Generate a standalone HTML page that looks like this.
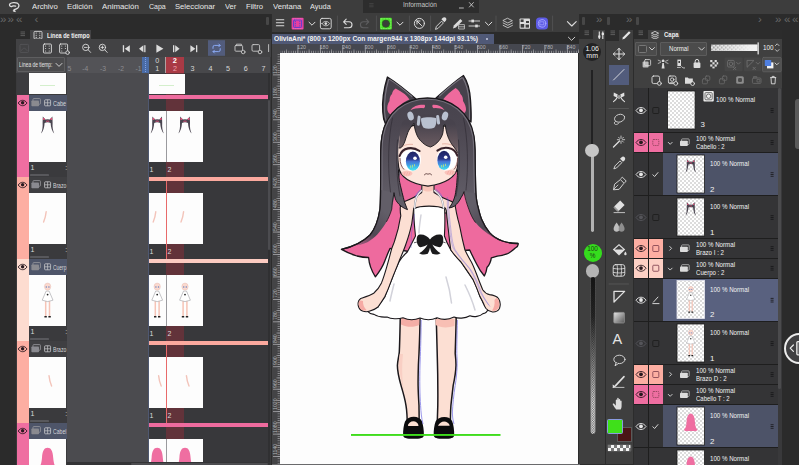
<!DOCTYPE html>
<html lang="es">
<head>
<meta charset="utf-8">
<title>OliviaAni - Clip Studio Paint</title>
<style>
html,body{margin:0;padding:0;}
body{width:799px;height:465px;overflow:hidden;background:#2c2c2c;position:relative;
 font-family:"Liberation Sans",sans-serif;color:#e4e4e4;}
.a{position:absolute;box-sizing:border-box;}
.t{position:absolute;white-space:nowrap;line-height:1;}
svg{position:absolute;overflow:visible;}
/* ---- menu ---- */
#menubar{left:0;top:0;width:799px;height:14px;background:#3d3d3d;}
#menubar .t{top:2.5px;font-size:8.6px;color:#e8e8e8;}
#info{left:363px;top:0;width:116px;height:13px;background:#2d2d2d;}
/* ---- left ---- */
#leftdock{left:0;top:14px;width:16px;height:451px;background:#2b2b2b;}
#leftarea{left:0;top:14px;width:271px;height:451px;background:#2b2b2b;}
#tl{left:16px;top:39px;width:255px;height:426px;background:#3a3a3c;}
/* ---- canvas ---- */
#cmdbar{left:272px;top:14px;width:307px;height:18px;background:#3d3d3d;}
#doctabs{left:272px;top:32px;width:307px;height:12px;background:#2b2b2b;}
#doctab{left:272px;top:34.400px;width:221.600px;height:9.600px;background:#505977;}
#hruler{left:272px;top:44px;width:307px;height:9px;background:#45474f;}
#vruler{left:272px;top:44px;width:8px;height:421px;background:#444446;}
#canvas{left:280px;top:53px;width:298px;height:411px;background:#fdfdfd;}
/* ---- right ---- */
#sliderpanel{left:579px;top:39px;width:26.400px;height:424.600px;background:#3f3f3f;}
#toolpanel{left:606px;top:41px;width:26.800px;height:422.600px;background:#3f3f3f;}
#layerpanel{left:634px;top:39px;width:148px;height:426px;background:#404040;}
#layerlist{left:634px;top:88px;width:144px;height:377px;background:#1e1e1e;}
</style>
</head>
<body>
<div class="a" id="menubar"></div>
<span class="t" style="left:31.75px;top:2.78px;font-size:8px;color:#e8e8e8;transform:scaleX(0.965);transform-origin:0 0;">Archivo</span>
<span class="t" style="left:67px;top:2.78px;font-size:8px;color:#e8e8e8;transform:scaleX(0.971);transform-origin:0 0;">Edición</span>
<span class="t" style="left:102px;top:2.78px;font-size:8px;color:#e8e8e8;transform:scaleX(0.984);transform-origin:0 0;">Animación</span>
<span class="t" style="left:148.75px;top:2.78px;font-size:8px;color:#e8e8e8;transform:scaleX(0.876);transform-origin:0 0;">Capa</span>
<span class="t" style="left:175px;top:2.78px;font-size:8px;color:#e8e8e8;transform:scaleX(0.957);transform-origin:0 0;">Seleccionar</span>
<span class="t" style="left:224.5px;top:2.78px;font-size:8px;color:#e8e8e8;transform:scaleX(0.936);transform-origin:0 0;">Ver</span>
<span class="t" style="left:245.5px;top:2.78px;font-size:8px;color:#e8e8e8;transform:scaleX(0.956);transform-origin:0 0;">Filtro</span>
<span class="t" style="left:272.5px;top:2.78px;font-size:8px;color:#e8e8e8;transform:scaleX(0.962);transform-origin:0 0;">Ventana</span>
<span class="t" style="left:310px;top:2.78px;font-size:8px;color:#e8e8e8;transform:scaleX(0.920);transform-origin:0 0;">Ayuda</span>
<div class="a" id="info"></div>
<span class="t" style="left:403px;top:2.27px;font-size:6.8px;color:#c4c4c4;transform:scaleX(0.957);transform-origin:0 0;">Información</span>
<svg style="left:363px;top:0" width="116" height="13" viewBox="363 0 116 13" fill="none" stroke="#c8c8c8" stroke-width="0.900" stroke-linecap="round"><path d="M459.400,8h4M469.400,2.600l4,4.400M473.400,2.600l-4,4.400"/><g stroke="#4a4a4a" stroke-width="0.700"><path d="M369.600,3.600h3.600M369.600,5.200h3.600M369.600,6.800h3.600"/></g></svg>
<svg style="left:8px;top:0" width="13" height="14" viewBox="8 0 13 14" fill="none" stroke="#dedede" stroke-width="1.300" stroke-linecap="round" stroke-linejoin="round"><path d="M15.600,6.200C14,5.600 12.300,5.800 11.300,6.700C9.600,6.300 9,4.800 10,3.800C11.600,2.400 15.200,2.200 17.400,3.200C19.500,4.400 19.300,6.800 17.800,8C16.600,8.900 15.300,9.300 14.100,9.700L15.100,11.500L13.400,10.800"/></svg>
<!-- ===== left dock + timeline ===== -->
<div class="a" id="leftarea"></div>
<div class="a" style="left:266px;top:16.5px;width:3px;height:8px;background:#474747;border-radius:1px"></div>
<span class="t" style="left:0px;top:13.5px;font-size:11.500px;color:#686868;letter-spacing:-1px">»</span>
<span class="t" style="left:7.6px;top:13.5px;font-size:11.500px;color:#686868;letter-spacing:-1px">»</span>
<span class="t" style="left:16px;top:13.5px;font-size:11.500px;color:#686868;letter-spacing:-1px">«</span>
<span class="t" style="left:34.6px;top:13.5px;font-size:11.500px;color:#686868">‹</span>
<div class="a" style="left:29.500px;top:30px;width:61.500px;height:10px;background:#434345"></div>
<svg style="left:16px;top:30px" width="80" height="10" viewBox="16 30 80 10" fill="none"><g stroke="#6a6a6a" stroke-width="0.8"><path d="M20.500,32h4.500M20.500,33.800h4.500M20.500,35.600h4.500"/></g><rect x="34" y="31.400" width="8" height="7.600" rx="1" stroke="#e6e6e6" stroke-width="0.8"/><path d="M36.200,33v0.010M36.200,35.200v0.010M36.200,37.400v0.010M39.800,33v0.010M39.800,35.200v0.010M39.800,37.400v0.010" stroke="#e6e6e6" stroke-width="1.100" stroke-linecap="round"/></svg>
<span class="t" style="left:46.6px;top:31.97px;font-size:7.4px;color:#f0f0f0;font-weight:bold;transform:scaleX(0.757);transform-origin:0 0;">Línea de tiempo</span>
<div class="a" id="tl"></div>
<div class="a" style="left:16px;top:39px;width:255px;height:17.600px;background:#424244"></div>
<svg style="left:16px;top:39px" width="254" height="18" viewBox="16 39 254 18" fill="none" stroke="#dcdcdc" stroke-width="0.9" stroke-linecap="round" stroke-linejoin="round"><g stroke="#555558"><rect x="20" y="44.400" width="8.600" height="8" rx="1"/><path d="M21.600,50.400c1.600,-3 3,-3 5.400,0"/></g><rect x="43.400" y="44" width="8" height="9" rx="1"/><path d="M45.600,46v0.010M45.600,48.500v0.010M45.600,51v0.010M49.200,46v0.010M49.200,48.500v0.010M49.200,51v0.010" stroke-width="1.100"/><rect x="59.600" y="44" width="8" height="9" rx="1"/><path d="M61.800,46v0.010M61.800,48.500v0.010M61.800,51v0.010M65.400,46v0.010M65.400,48.500v0.010" stroke-width="1.100"/><circle cx="67.600" cy="52.600" r="1.800" fill="#424244"/><circle cx="85.800" cy="47.400" r="3.200"/><path d="M88.200,49.800l2.400,2.600M84.400,47.400h2.800"/><circle cx="102.400" cy="47.400" r="3.200"/><path d="M104.800,49.800l2.400,2.600M101,47.400h2.800M102.400,46v2.800"/><g fill="#dcdcdc" stroke="none"><rect x="122.800" y="45.200" width="1.300" height="7"/><path d="M129.800,45.200v7l-5,-3.500z"/><path d="M143.400,45.200v7l-4.400,-3.500z"/><rect x="144.200" y="45.200" width="1.300" height="7"/><path d="M156.400,44.600v8.200l7,-4.100z"/><rect x="173" y="45.200" width="1.300" height="7"/><path d="M175.200,45.200v7l4.400,-3.500z"/><path d="M190.400,45.200v7l5,-3.500z"/><rect x="196" y="45.200" width="1.300" height="7"/></g><rect x="208" y="40.200" width="17" height="15.600" fill="#525c7c" stroke="none"/><g stroke="#8fb0ff" stroke-width="0.9"><path d="M213,48.400v-1.400a1.600,1.600 0 0 1 1.600,-1.600h5.400M220.200,48.600v1.400a1.600,1.600 0 0 1 -1.600,1.600h-5.400"/><path d="M218.800,44l1.400,1.400l-1.400,1.400M214.400,50.200l-1.400,1.400l1.400,1.400"/></g><g stroke="#c8c8c8"><rect x="235" y="45.600" width="7.600" height="5.600" rx="0.800"/><path d="M236.400,45.400v-1.200h5v1.200"/><circle cx="243.200" cy="52" r="1.800" fill="#424244"/><rect x="252" y="44.600" width="7.600" height="6.600" rx="1.200"/><circle cx="260" cy="52" r="1.800" fill="#424244"/><path d="M268.600,44.600v7" /></g></svg>
<div class="a" style="left:16px;top:56.6px;width:254px;height:16.2px;background:#48484b"></div>
<div class="a" style="left:16.600px;top:56.600px;width:48.600px;height:15.800px;background:#4b4b4d;border:1px solid #5e5e60;border-radius:1px"></div>
<span class="t" style="left:18.6px;top:61.67px;font-size:6.8px;color:#e4e4e4;transform:scaleX(0.713);transform-origin:0 0;">Línea de tiemp:</span>
<svg style="left:55px;top:60px" width="8" height="8" viewBox="55 60 8 8" fill="none" stroke="#dcdcdc" stroke-width="0.9" stroke-linecap="round"><path d="M56,63.400l3,3l3,-3"/></svg>
<div class="a" style="left:148.5px;top:72.8px;width:119.500px;height:392.200px;background:#38383b"></div>
<div class="a" style="left:165.6px;top:56.6px;width:18.800px;height:16.200px;background:#a93a45"></div>
<div class="a" style="left:165.6px;top:72.8px;width:18.800px;height:392.200px;background:#62333a"></div>
<div class="a" style="left:164.900px;top:56.600px;width:0.800px;height:16.200px;background:#b0a0a0"></div>
<div class="a" style="left:67px;top:72.8px;width:81.4px;height:392.2px;background:#4b4b4f"></div>
<div class="a" style="left:67px;top:56.6px;width:75.4px;height:16.2px;background:#535357"></div>
<div class="a" style="left:142.200px;top:56.600px;width:6.400px;height:16.200px;background:#4a6ca6"></div>
<div class="a" style="left:145px;top:57.400px;width:0;height:14.600px;border-left:1px dotted #7ea0e8"></div>
<div class="a" style="left:148px;top:72.800px;width:0.800px;height:392.200px;background:#4f5870"></div>
<span class="t" style="left:82.2px;top:65.87px;font-size:6.8px;color:#8c8c90;">-4</span>
<span class="t" style="left:100px;top:65.87px;font-size:6.8px;color:#8c8c90;">-3</span>
<span class="t" style="left:118px;top:65.87px;font-size:6.8px;color:#8c8c90;">-2</span>
<span class="t" style="left:135.6px;top:65.87px;font-size:6.8px;color:#8c8c90;">-1</span>
<span class="t" style="left:67.4px;top:65.87px;font-size:6.8px;color:#8c8c90;">5</span>
<span class="t" style="left:155.2px;top:65.07px;font-size:7.2px;color:#d8d8d8;">1</span>
<span class="t" style="left:190.6px;top:65.07px;font-size:7.2px;color:#d8d8d8;">3</span>
<span class="t" style="left:208.4px;top:65.07px;font-size:7.2px;color:#d8d8d8;">4</span>
<span class="t" style="left:226.1px;top:65.07px;font-size:7.2px;color:#d8d8d8;">5</span>
<span class="t" style="left:243.8px;top:65.07px;font-size:7.2px;color:#d8d8d8;">6</span>
<span class="t" style="left:261.5px;top:65.07px;font-size:7.2px;color:#d8d8d8;">7</span>
<span class="t" style="left:155.2px;top:56.67px;font-size:7.2px;color:#d8d8d8;">0</span>
<span class="t" style="left:172.8px;top:56.57px;font-size:7.4px;color:#ffffff;font-weight:bold;">2</span>
<span class="t" style="left:172.9px;top:65.07px;font-size:7.2px;color:#f0a4b0;">2</span>
<div class="a" style="left:16.600px;top:72.800px;width:12px;height:22.200px;background:#3c3c3f"></div>
<div class="a" style="left:29px;top:73.400px;width:37.400px;height:21px;background:#fdfdfd"></div>
<div class="a" style="left:148.800px;top:73.600px;width:36.400px;height:20.600px;background:#fdfdfd"></div>
<div class="a" style="left:40px;top:84.600px;width:15px;height:0.800px;background:#d4efcc"></div>
<div class="a" style="left:159px;top:84.600px;width:15px;height:0.800px;background:#d4efcc"></div>
<div class="a" style="left:16.600px;top:95px;width:12px;height:82px;background:#ef6ea1"></div>
<div class="a" style="left:29px;top:95px;width:38px;height:15.600px;background:#4e5569"></div>
<div class="a" style="left:29px;top:110.6px;width:37.400px;height:51.400px;background:#fdfdfd"></div>
<div class="a" style="left:29px;top:162px;width:38px;height:15px;background:#3a3a3d"></div>
<div class="a" style="left:30px;top:174.4px;width:19px;height:1.200px;background:#58585c;border-radius:0.600px"></div>
<span class="t" style="left:30.4px;top:163.97px;font-size:7px;color:#dcdcdc;">1</span>
<span class="t" style="left:65.2px;top:163.97px;font-size:7px;color:#dcdcdc;">:</span>
<span class="t" style="left:53.4px;top:99.57px;font-size:7px;color:#d4d4d8;transform:scaleX(0.777);transform-origin:0 0;">Cabe</span>
<div class="a" style="left:148.6px;top:95px;width:119.400px;height:4.400px;background:#ee6b9e"></div>
<div class="a" style="left:148.8px;top:110.6px;width:16.800px;height:51.400px;background:#fdfdfd"></div>
<div class="a" style="left:166.6px;top:110.6px;width:36.200px;height:51.400px;background:#fdfdfd"></div>
<div class="a" style="left:165.6px;top:110.6px;width:1px;height:51.4px;background:#9a9a9e"></div>
<span class="t" style="left:149.4px;top:166.17px;font-size:7px;color:#dcdcdc;">1</span>
<span class="t" style="left:167.4px;top:166.17px;font-size:7px;color:#dcdcdc;">2</span>
<div class="a" style="left:16.600px;top:177px;width:12px;height:82px;background:#fdaea2"></div>
<div class="a" style="left:29px;top:177px;width:38px;height:15.600px;background:#3f3f42"></div>
<div class="a" style="left:29px;top:192.6px;width:37.400px;height:51.400px;background:#fdfdfd"></div>
<div class="a" style="left:29px;top:244px;width:38px;height:15px;background:#3a3a3d"></div>
<div class="a" style="left:30px;top:256.4px;width:19px;height:1.200px;background:#58585c;border-radius:0.600px"></div>
<span class="t" style="left:30.4px;top:245.97px;font-size:7px;color:#dcdcdc;">1</span>
<span class="t" style="left:65.2px;top:245.97px;font-size:7px;color:#dcdcdc;">:</span>
<span class="t" style="left:53.4px;top:181.57px;font-size:7px;color:#d4d4d8;transform:scaleX(0.732);transform-origin:0 0;">Brazo</span>
<div class="a" style="left:148.6px;top:177px;width:119.400px;height:4.400px;background:#fba99e"></div>
<div class="a" style="left:148.8px;top:192.6px;width:16.800px;height:51.400px;background:#fdfdfd"></div>
<div class="a" style="left:166.6px;top:192.6px;width:36.200px;height:51.400px;background:#fdfdfd"></div>
<div class="a" style="left:165.6px;top:181.4px;width:1px;height:77.6px;background:#e86a6a"></div>
<span class="t" style="left:149.4px;top:248.17px;font-size:7px;color:#dcdcdc;">1</span>
<span class="t" style="left:167.4px;top:248.17px;font-size:7px;color:#dcdcdc;">2</span>
<div class="a" style="left:16.600px;top:259px;width:12px;height:82px;background:#fddcd0"></div>
<div class="a" style="left:29px;top:259px;width:38px;height:15.600px;background:#4e5569"></div>
<div class="a" style="left:29px;top:274.6px;width:37.400px;height:51.400px;background:#fdfdfd"></div>
<div class="a" style="left:29px;top:326px;width:38px;height:15px;background:#3a3a3d"></div>
<div class="a" style="left:30px;top:338.4px;width:19px;height:1.200px;background:#58585c;border-radius:0.600px"></div>
<span class="t" style="left:30.4px;top:327.97px;font-size:7px;color:#dcdcdc;">1</span>
<span class="t" style="left:65.2px;top:327.97px;font-size:7px;color:#dcdcdc;">:</span>
<span class="t" style="left:53.4px;top:263.57px;font-size:7px;color:#d4d4d8;transform:scaleX(0.702);transform-origin:0 0;">Cuerp</span>
<div class="a" style="left:148.6px;top:259px;width:119.400px;height:4.400px;background:#fccbc1"></div>
<div class="a" style="left:148.8px;top:274.6px;width:16.800px;height:51.400px;background:#fdfdfd"></div>
<div class="a" style="left:166.6px;top:274.6px;width:36.200px;height:51.400px;background:#fdfdfd"></div>
<div class="a" style="left:165.6px;top:274.6px;width:1px;height:51.4px;background:#9a9a9e"></div>
<span class="t" style="left:149.4px;top:330.17px;font-size:7px;color:#dcdcdc;">1</span>
<span class="t" style="left:167.4px;top:330.17px;font-size:7px;color:#dcdcdc;">2</span>
<div class="a" style="left:16.600px;top:341px;width:12px;height:82px;background:#fdaea2"></div>
<div class="a" style="left:29px;top:341px;width:38px;height:15.600px;background:#3f3f42"></div>
<div class="a" style="left:29px;top:356.6px;width:37.400px;height:51.400px;background:#fdfdfd"></div>
<div class="a" style="left:29px;top:408px;width:38px;height:15px;background:#3a3a3d"></div>
<div class="a" style="left:30px;top:420.4px;width:19px;height:1.200px;background:#58585c;border-radius:0.600px"></div>
<span class="t" style="left:30.4px;top:409.97px;font-size:7px;color:#dcdcdc;">1</span>
<span class="t" style="left:65.2px;top:409.97px;font-size:7px;color:#dcdcdc;">:</span>
<span class="t" style="left:53.4px;top:345.57px;font-size:7px;color:#d4d4d8;transform:scaleX(0.732);transform-origin:0 0;">Brazo</span>
<div class="a" style="left:148.6px;top:341px;width:119.400px;height:4.400px;background:#fba99e"></div>
<div class="a" style="left:148.8px;top:356.6px;width:16.800px;height:51.400px;background:#fdfdfd"></div>
<div class="a" style="left:166.6px;top:356.6px;width:36.200px;height:51.400px;background:#fdfdfd"></div>
<div class="a" style="left:165.6px;top:345.4px;width:1px;height:77.6px;background:#e86a6a"></div>
<span class="t" style="left:149.4px;top:412.17px;font-size:7px;color:#dcdcdc;">1</span>
<span class="t" style="left:167.4px;top:412.17px;font-size:7px;color:#dcdcdc;">2</span>
<div class="a" style="left:16.600px;top:423px;width:12px;height:82px;background:#ef6ea1"></div>
<div class="a" style="left:29px;top:423px;width:38px;height:15.600px;background:#4e5569"></div>
<div class="a" style="left:29px;top:438.6px;width:37.400px;height:51.400px;background:#fdfdfd"></div>
<div class="a" style="left:29px;top:490px;width:38px;height:15px;background:#3a3a3d"></div>
<div class="a" style="left:30px;top:502.4px;width:19px;height:1.200px;background:#58585c;border-radius:0.600px"></div>
<span class="t" style="left:30.4px;top:491.97px;font-size:7px;color:#dcdcdc;">1</span>
<span class="t" style="left:65.2px;top:491.97px;font-size:7px;color:#dcdcdc;">:</span>
<span class="t" style="left:53.4px;top:427.57px;font-size:7px;color:#d4d4d8;transform:scaleX(0.732);transform-origin:0 0;">Cabel</span>
<div class="a" style="left:148.6px;top:423px;width:119.400px;height:4.400px;background:#ee6b9e"></div>
<div class="a" style="left:148.8px;top:438.6px;width:16.800px;height:51.400px;background:#fdfdfd"></div>
<div class="a" style="left:166.6px;top:438.6px;width:36.200px;height:51.400px;background:#fdfdfd"></div>
<div class="a" style="left:165.6px;top:438.6px;width:1px;height:51.4px;background:#9a9a9e"></div>
<span class="t" style="left:149.4px;top:494.17px;font-size:7px;color:#dcdcdc;">1</span>
<span class="t" style="left:167.4px;top:494.17px;font-size:7px;color:#dcdcdc;">2</span>
<svg style="left:0;top:0" width="271" height="465" viewBox="0 0 271 465"><path d="M18.200000000000003,103c2.400,-3.600 6.400,-3.600 8.800,0c-2.400,3.600 -6.400,3.600 -8.800,0z" fill="none" stroke="#2a1a20" stroke-width="0.900"/><circle cx="22.600" cy="102.8" r="1.700" fill="#2a1a20"/><rect x="33" y="98.6" width="7.400" height="5.600" rx="0.800" fill="none" stroke="#9a9aa0" stroke-width="0.800"/><rect x="31.400" y="100.4" width="7.600" height="5.800" rx="0.800" fill="#8a8a90"/><rect x="44.600" y="99.8" width="6" height="6" rx="0.800" fill="none" stroke="#c8c8cc" stroke-width="0.800"/><path d="M47.600,99.8v6M44.600,102.8h6" stroke="#c8c8cc" stroke-width="0.700"/><path d="M42.8,116.6 L45.4,119.6 Q47.6,118.8 49.8,119.6 L52.4,116.6 L52.6,122.6 Q52.2,129.6 54.2,133.4 Q51.0,130.6 50.6,123.1 Q47.6,121.6 44.6,123.1 Q44.2,130.6 41.0,133.4 Q43.0,129.6 42.6,122.6 Z" fill="#4a4550"/><circle cx="43.9" cy="119.0" r="1.00" fill="#e8507c"/><circle cx="51.3" cy="119.0" r="1.00" fill="#e8507c"/><path d="M46.0,121.4 Q47.6,120.6 49.2,121.4" stroke="#e8507c" stroke-width="0.90" fill="none"/><path d="M152.4,116.6 L155.0,119.6 Q157.2,118.8 159.4,119.6 L162.0,116.6 L162.2,122.6 Q161.8,129.6 163.8,133.4 Q160.6,130.6 160.2,123.1 Q157.2,121.6 154.2,123.1 Q153.8,130.6 150.6,133.4 Q152.6,129.6 152.2,122.6 Z" fill="#4a4550"/><circle cx="153.5" cy="119.0" r="1.00" fill="#e8507c"/><circle cx="160.9" cy="119.0" r="1.00" fill="#e8507c"/><path d="M155.6,121.4 Q157.2,120.6 158.8,121.4" stroke="#e8507c" stroke-width="0.90" fill="none"/><path d="M180.2,116.6 L182.8,119.6 Q185.0,118.8 187.2,119.6 L189.8,116.6 L190.0,122.6 Q189.6,129.6 191.6,133.4 Q188.4,130.6 188.0,123.1 Q185.0,121.6 182.0,123.1 Q181.6,130.6 178.4,133.4 Q180.4,129.6 180.0,122.6 Z" fill="#4a4550"/><circle cx="181.3" cy="119.0" r="1.00" fill="#e8507c"/><circle cx="188.7" cy="119.0" r="1.00" fill="#e8507c"/><path d="M183.4,121.4 Q185.0,120.6 186.6,121.4" stroke="#e8507c" stroke-width="0.90" fill="none"/><path d="M18.200000000000003,185c2.400,-3.600 6.400,-3.600 8.800,0c-2.400,3.600 -6.400,3.600 -8.800,0z" fill="none" stroke="#2a1a20" stroke-width="0.900"/><circle cx="22.600" cy="184.8" r="1.700" fill="#2a1a20"/><rect x="33" y="180.6" width="7.400" height="5.600" rx="0.800" fill="none" stroke="#9a9aa0" stroke-width="0.800"/><rect x="31.400" y="182.4" width="7.600" height="5.800" rx="0.800" fill="#8a8a90"/><rect x="44.600" y="181.8" width="6" height="6" rx="0.800" fill="none" stroke="#c8c8cc" stroke-width="0.800"/><path d="M47.600,181.8v6M44.600,184.8h6" stroke="#c8c8cc" stroke-width="0.700"/><path d="M46.2,211.6c-0.400,4 -1.400,7.500 -2.600,10.500" stroke="#f3c4ba" stroke-width="1.400" fill="none" stroke-linecap="round"/><path d="M155.8,211.6c-0.400,4 -1.400,7.500 -2.600,10.500" stroke="#f3c4ba" stroke-width="1.400" fill="none" stroke-linecap="round"/><path d="M183.6,211.6c-0.400,4 -1.400,7.500 -2.600,10.500" stroke="#f3c4ba" stroke-width="1.400" fill="none" stroke-linecap="round"/><path d="M18.200000000000003,267c2.400,-3.600 6.400,-3.600 8.800,0c-2.400,3.600 -6.400,3.600 -8.800,0z" fill="none" stroke="#2a1a20" stroke-width="0.900"/><circle cx="22.600" cy="266.8" r="1.700" fill="#2a1a20"/><rect x="33" y="262.6" width="7.400" height="5.600" rx="0.800" fill="none" stroke="#9a9aa0" stroke-width="0.800"/><rect x="31.400" y="264.4" width="7.600" height="5.800" rx="0.800" fill="#8a8a90"/><rect x="44.600" y="263.8" width="6" height="6" rx="0.800" fill="none" stroke="#c8c8cc" stroke-width="0.800"/><path d="M47.600,263.8v6M44.600,266.8h6" stroke="#c8c8cc" stroke-width="0.700"/><path d="M45.7,300.6V316.1M49.5,300.6V316.1" stroke="#f6c4b6" stroke-width="1.50"/><path d="M46.1,291.1H49.1L53.0,300.2Q47.6,303.0 42.2,300.2Z" fill="#fff" stroke="#8a8a90" stroke-width="0.50"/><ellipse cx="47.6" cy="286.6" rx="3.20" ry="3.60" fill="#fbd9ce" stroke="#d8a8a0" stroke-width="0.300"/><path d="M45.7,287.0h1.20M48.3,287.0h1.20" stroke="#3a6ac0" stroke-width="1.10"/><circle cx="47.6" cy="294.6" r="0.90" fill="#222"/><path d="M44.4,316.8h2.40M48.4,316.8h2.40" stroke="#222" stroke-width="1.50"/><path d="M155.3,300.6V316.1M159.1,300.6V316.1" stroke="#f6c4b6" stroke-width="1.50"/><path d="M155.7,291.1H158.7L162.6,300.2Q157.2,303.0 151.8,300.2Z" fill="#fff" stroke="#8a8a90" stroke-width="0.50"/><ellipse cx="157.2" cy="286.6" rx="3.20" ry="3.60" fill="#fbd9ce" stroke="#d8a8a0" stroke-width="0.300"/><path d="M155.3,287.0h1.20M157.9,287.0h1.20" stroke="#3a6ac0" stroke-width="1.10"/><circle cx="157.2" cy="294.6" r="0.90" fill="#222"/><path d="M154.0,316.8h2.40M158.0,316.8h2.40" stroke="#222" stroke-width="1.50"/><path d="M183.1,300.6V316.1M186.9,300.6V316.1" stroke="#f6c4b6" stroke-width="1.50"/><path d="M183.5,291.1H186.5L190.4,300.2Q185.0,303.0 179.6,300.2Z" fill="#fff" stroke="#8a8a90" stroke-width="0.50"/><ellipse cx="185.0" cy="286.6" rx="3.20" ry="3.60" fill="#fbd9ce" stroke="#d8a8a0" stroke-width="0.300"/><path d="M183.1,287.0h1.20M185.7,287.0h1.20" stroke="#3a6ac0" stroke-width="1.10"/><circle cx="185.0" cy="294.6" r="0.90" fill="#222"/><path d="M181.8,316.8h2.40M185.8,316.8h2.40" stroke="#222" stroke-width="1.50"/><path d="M18.200000000000003,349c2.400,-3.600 6.400,-3.600 8.800,0c-2.400,3.600 -6.400,3.600 -8.800,0z" fill="none" stroke="#2a1a20" stroke-width="0.900"/><circle cx="22.600" cy="348.8" r="1.700" fill="#2a1a20"/><rect x="33" y="344.6" width="7.400" height="5.600" rx="0.800" fill="none" stroke="#9a9aa0" stroke-width="0.800"/><rect x="31.400" y="346.4" width="7.600" height="5.800" rx="0.800" fill="#8a8a90"/><rect x="44.600" y="345.8" width="6" height="6" rx="0.800" fill="none" stroke="#c8c8cc" stroke-width="0.800"/><path d="M47.600,345.8v6M44.600,348.8h6" stroke="#c8c8cc" stroke-width="0.700"/><path d="M49.0,375.6c0.400,4 1.400,7.500 2.600,10.500" stroke="#f3c4ba" stroke-width="1.400" fill="none" stroke-linecap="round"/><path d="M158.6,375.6c0.400,4 1.400,7.500 2.600,10.500" stroke="#f3c4ba" stroke-width="1.400" fill="none" stroke-linecap="round"/><path d="M186.4,375.6c0.400,4 1.400,7.500 2.600,10.500" stroke="#f3c4ba" stroke-width="1.400" fill="none" stroke-linecap="round"/><path d="M18.200000000000003,431c2.400,-3.600 6.400,-3.600 8.800,0c-2.400,3.600 -6.400,3.600 -8.800,0z" fill="none" stroke="#2a1a20" stroke-width="0.900"/><circle cx="22.600" cy="430.8" r="1.700" fill="#2a1a20"/><rect x="33" y="426.6" width="7.400" height="5.600" rx="0.800" fill="none" stroke="#9a9aa0" stroke-width="0.800"/><rect x="31.400" y="428.4" width="7.600" height="5.800" rx="0.800" fill="#8a8a90"/><rect x="44.600" y="427.8" width="6" height="6" rx="0.800" fill="none" stroke="#c8c8cc" stroke-width="0.800"/><path d="M47.600,427.8v6M44.600,430.8h6" stroke="#c8c8cc" stroke-width="0.700"/><path d="M43.0,470.2c-2,0.600 -3.600,0 -4.800,-1.500c2.500,-2.200 3.400,-6.400 3.800,-11c0.400,-7 2.200,-10 5.600,-10c3.400,0 5.200,3 5.600,10c0.400,4.600 1.300,8.800 3.800,11c-1.200,1.500 -2.800,2.100 -4.800,1.500z" fill="#ef6ea1"/><path d="M152.6,470.2c-2,0.600 -3.600,0 -4.800,-1.500c2.500,-2.200 3.400,-6.400 3.800,-11c0.400,-7 2.200,-10 5.600,-10c3.400,0 5.200,3 5.600,10c0.400,4.600 1.300,8.800 3.800,11c-1.200,1.500 -2.800,2.100 -4.800,1.500z" fill="#ef6ea1"/><path d="M180.4,470.2c-2,0.600 -3.600,0 -4.800,-1.500c2.500,-2.200 3.400,-6.400 3.800,-11c0.400,-7 2.200,-10 5.600,-10c3.400,0 5.200,3 5.600,10c0.400,4.600 1.300,8.800 3.800,11c-1.200,1.500 -2.800,2.100 -4.800,1.500z" fill="#ef6ea1"/></svg>
<div class="a" style="left:268px;top:72.800px;width:2px;height:392.200px;background:#303032"></div>
<div class="a" style="left:268.200px;top:100px;width:1.600px;height:150px;background:#4c4c50;border-radius:1px"></div>
<div class="a" style="left:67px;top:462.400px;width:203px;height:2.600px;background:#343436"></div>
<div class="a" style="left:131px;top:462.600px;width:137px;height:2.400px;background:#4d4d50;border-radius:1px"></div>
<!-- ===== command bar / doc tab / rulers / canvas ===== -->
<div class="a" id="cmdbar"></div>
<svg style="left:272px;top:14px" width="308" height="18" viewBox="272 14 308 18" fill="none" stroke="#dcdcdc" stroke-width="1" stroke-linecap="round" stroke-linejoin="round"><path d="M276.400,19.800h7.400M276.400,22.800h7.400M276.400,25.800h7.400" stroke-width="1.100"/><rect x="291.600" y="17.800" width="12" height="11.800" rx="1" fill="#e83ea0" stroke="none"/><rect x="293.600" y="20" width="8" height="7.400" rx="0.800" fill="none" stroke="#5a40d0" stroke-width="1"/><path d="M295.400,21.600v0.010M295.400,23.700v0.010M295.400,25.800v0.010M299.800,21.600v0.010M299.800,23.700v0.010M299.800,25.800v0.010" stroke="#5a40d0" stroke-width="1.200"/><path d="M293,18.800h9.200M293,28.600h9.200" stroke="#f070c0" stroke-width="0.800" stroke-dasharray="1.200 1"/><path d="M309,22.200l3,3l3,-3"/><rect x="320.400" y="18.400" width="10.800" height="10.400" rx="1.600" stroke-width="0.900"/><path d="M322,23.600c2,-3 5.600,-3 7.600,0c-2,3 -5.600,3 -7.600,0z" stroke-width="0.800"/><circle cx="325.800" cy="23.600" r="1.300" fill="#dcdcdc" stroke="none"/><path d="M337.400,16v14.400M376.400,16v14.400M409.400,16v14.400M430.600,16v14.400M496,16v14.400M552.600,16v14.400" stroke="#555557" stroke-width="0.800"/><path d="M346.200,19.200l-2.600,2.600l2.600,2.600M343.800,21.800h5.200a3,3 0 0 1 0,6h-4.600" stroke-width="1.100"/><path d="M366.200,19.200l2.600,2.600l-2.600,2.600M368.600,21.800h-5.200a3,3 0 0 0 0,6h4.600" stroke-width="1.100" stroke="#5e5e60"/><rect x="380" y="17.800" width="11.800" height="11.800" rx="1" fill="#44e022" stroke="none"/><circle cx="385.900" cy="23.700" r="3.600" fill="#3a3f3a" stroke="#2a5a20" stroke-width="0.800"/><path d="M381,18.800h9.800v9.800h-9.800z" stroke="#8af070" stroke-width="0.800" stroke-dasharray="1.400 1.200"/><path d="M397,22.200l3,3l3,-3"/><circle cx="419.400" cy="23.400" r="5" stroke-width="1"/><path d="M417,21l4.600,4.600M417,21h3M417,21v3" stroke-width="1"/><path d="M435.600,29l0.800,-2.600l5.200,-5.200l1.800,1.800l-5.200,5.200z" stroke-width="0.900"/><path d="M441.400,19.200l3,3l1.400,-1.400c0.800,-0.800 0.800,-2.200 0,-3c-0.800,-0.800 -2.200,-0.800 -3,0z" fill="#dcdcdc" stroke="none"/><path d="M453,28.400l0.800,-2.800l6.600,-6.600l2,2l-6.600,6.600z" fill="#dcdcdc" stroke="none"/><path d="M459,24.600h5.400v4.400h-5.400zM459,26.800h5.400" stroke-width="0.700"/><path d="M469,21h10.600M469,26h10.600" stroke-width="0.900"/><rect x="471.400" y="19.600" width="2.600" height="2.800" fill="#dcdcdc" stroke="none"/><rect x="475.200" y="24.600" width="2.600" height="2.800" fill="#dcdcdc" stroke="none"/><path d="M485.400,22.200l3.200,3.200l3.200,-3.200"/><path d="M507.800,18.400l4.600,2.300l-4.600,2.300l-4.600,-2.300z" stroke-width="0.800"/><path d="M503.200,23l4.600,2.300l4.600,-2.300M503.200,25.400l4.600,2.300l4.600,-2.300" stroke-width="0.800"/><g fill="#dcdcdc" stroke="none"><rect x="519.600" y="18.400" width="10.400" height="10.400" rx="0.800"/></g><g fill="#3e3e3e" stroke="none"><rect x="520.600" y="19.400" width="3" height="2.600"/><rect x="526" y="21" width="3" height="2"/><rect x="520.600" y="24" width="3.600" height="3.600"/><rect x="525.600" y="24.600" width="3.400" height="3"/></g><rect x="536" y="17.600" width="12" height="12" rx="3.600" fill="#5d5be6" stroke="none"/><circle cx="542" cy="23.400" r="3.800" fill="none" stroke="#a8a8ff" stroke-width="0.900"/><rect x="540.200" y="21.800" width="3.600" height="3" fill="none" stroke="#a8a8ff" stroke-width="0.700"/><path d="M567.400,21.600l4.400,4.400l4.400,-4.400" stroke-width="1.100"/></svg>
<div class="a" id="doctabs"></div>
<div class="a" id="doctab"></div>
<span class="t" style="left:274px;top:34.97px;font-size:7.4px;color:#f4f4f4;font-weight:bold;transform:scaleX(0.900);transform-origin:0 0;">OliviaAni* (800 x 1200px Con margen944 x 1308px 144dpi 93.1%)</span>
<div class="a" style="left:486.200px;top:37.600px;width:2px;height:2px;border-radius:1px;background:#c8cce0"></div>
<svg style="left:566px;top:34px" width="12" height="9" viewBox="566 34 12 9" fill="none" stroke="#dcdcdc" stroke-width="0.900" stroke-linecap="round"><path d="M568.400,37.200l3.200,3.200l3.200,-3.200"/></svg>
<div class="a" id="hruler"></div>
<div class="a" id="vruler"></div>
<svg style="left:272px;top:44px" width="308" height="421" viewBox="272 44 308 421"><defs><pattern id="ht" x="297.5" y="44" width="2.245" height="9" patternUnits="userSpaceOnUse"><rect x="0" y="6.800" width="0.700" height="2.200" fill="#9a9a9e"/></pattern><pattern id="vt" x="272" y="74.5" width="8" height="2.245" patternUnits="userSpaceOnUse"><rect x="5.600" y="0" width="2.200" height="0.700" fill="#9a9a9e"/></pattern></defs><rect x="280" y="44" width="299" height="9" fill="url(#ht)"/><rect x="272" y="53" width="8" height="412" fill="url(#vt)"/><rect x="286.27" y="49.400" width="0.700" height="3.600" fill="#9a9a9e"/><rect x="297.50" y="45" width="0.8" height="8" fill="#a8a8ac"/><rect x="308.72" y="49.400" width="0.700" height="3.600" fill="#9a9a9e"/><rect x="319.95" y="45" width="0.8" height="8" fill="#a8a8ac"/><rect x="331.17" y="49.400" width="0.700" height="3.600" fill="#9a9a9e"/><rect x="342.40" y="45" width="0.8" height="8" fill="#a8a8ac"/><rect x="353.62" y="49.400" width="0.700" height="3.600" fill="#9a9a9e"/><rect x="364.85" y="45" width="0.8" height="8" fill="#a8a8ac"/><rect x="376.07" y="49.400" width="0.700" height="3.600" fill="#9a9a9e"/><rect x="387.30" y="45" width="0.8" height="8" fill="#a8a8ac"/><rect x="398.52" y="49.400" width="0.700" height="3.600" fill="#9a9a9e"/><rect x="409.75" y="45" width="0.8" height="8" fill="#a8a8ac"/><rect x="420.97" y="49.400" width="0.700" height="3.600" fill="#9a9a9e"/><rect x="432.20" y="45" width="0.8" height="8" fill="#a8a8ac"/><rect x="443.42" y="49.400" width="0.700" height="3.600" fill="#9a9a9e"/><rect x="454.65" y="45" width="0.8" height="8" fill="#a8a8ac"/><rect x="465.87" y="49.400" width="0.700" height="3.600" fill="#9a9a9e"/><rect x="477.10" y="45" width="0.8" height="8" fill="#a8a8ac"/><rect x="488.32" y="49.400" width="0.700" height="3.600" fill="#9a9a9e"/><rect x="499.55" y="45" width="0.8" height="8" fill="#a8a8ac"/><rect x="510.77" y="49.400" width="0.700" height="3.600" fill="#9a9a9e"/><rect x="522.00" y="45" width="0.8" height="8" fill="#a8a8ac"/><rect x="533.22" y="49.400" width="0.700" height="3.600" fill="#9a9a9e"/><rect x="544.45" y="45" width="0.8" height="8" fill="#a8a8ac"/><rect x="555.67" y="49.400" width="0.700" height="3.600" fill="#9a9a9e"/><rect x="566.90" y="45" width="0.8" height="8" fill="#a8a8ac"/><rect x="578.12" y="49.400" width="0.700" height="3.600" fill="#9a9a9e"/><rect x="276.400" y="63.27" width="3.600" height="0.700" fill="#9a9a9e"/><rect x="273" y="74.50" width="7" height="0.800" fill="#a8a8ac"/><rect x="276.400" y="85.72" width="3.600" height="0.700" fill="#9a9a9e"/><rect x="273" y="96.95" width="7" height="0.800" fill="#a8a8ac"/><rect x="276.400" y="108.17" width="3.600" height="0.700" fill="#9a9a9e"/><rect x="273" y="119.40" width="7" height="0.800" fill="#a8a8ac"/><rect x="276.400" y="130.62" width="3.600" height="0.700" fill="#9a9a9e"/><rect x="273" y="141.85" width="7" height="0.800" fill="#a8a8ac"/><rect x="276.400" y="153.07" width="3.600" height="0.700" fill="#9a9a9e"/><rect x="273" y="164.30" width="7" height="0.800" fill="#a8a8ac"/><rect x="276.400" y="175.52" width="3.600" height="0.700" fill="#9a9a9e"/><rect x="273" y="186.75" width="7" height="0.800" fill="#a8a8ac"/><rect x="276.400" y="197.97" width="3.600" height="0.700" fill="#9a9a9e"/><rect x="273" y="209.20" width="7" height="0.800" fill="#a8a8ac"/><rect x="276.400" y="220.42" width="3.600" height="0.700" fill="#9a9a9e"/><rect x="273" y="231.65" width="7" height="0.800" fill="#a8a8ac"/><rect x="276.400" y="242.87" width="3.600" height="0.700" fill="#9a9a9e"/><rect x="273" y="254.10" width="7" height="0.800" fill="#a8a8ac"/><rect x="276.400" y="265.32" width="3.600" height="0.700" fill="#9a9a9e"/><rect x="273" y="276.55" width="7" height="0.800" fill="#a8a8ac"/><rect x="276.400" y="287.77" width="3.600" height="0.700" fill="#9a9a9e"/><rect x="273" y="299.00" width="7" height="0.800" fill="#a8a8ac"/><rect x="276.400" y="310.22" width="3.600" height="0.700" fill="#9a9a9e"/><rect x="273" y="321.45" width="7" height="0.800" fill="#a8a8ac"/><rect x="276.400" y="332.67" width="3.600" height="0.700" fill="#9a9a9e"/><rect x="273" y="343.90" width="7" height="0.800" fill="#a8a8ac"/><rect x="276.400" y="355.12" width="3.600" height="0.700" fill="#9a9a9e"/><rect x="273" y="366.35" width="7" height="0.800" fill="#a8a8ac"/><rect x="276.400" y="377.57" width="3.600" height="0.700" fill="#9a9a9e"/><rect x="273" y="388.80" width="7" height="0.800" fill="#a8a8ac"/><rect x="276.400" y="400.02" width="3.600" height="0.700" fill="#9a9a9e"/><rect x="273" y="411.25" width="7" height="0.800" fill="#a8a8ac"/><rect x="276.400" y="422.47" width="3.600" height="0.700" fill="#9a9a9e"/><rect x="273" y="433.70" width="7" height="0.800" fill="#a8a8ac"/><rect x="276.400" y="444.92" width="3.600" height="0.700" fill="#9a9a9e"/><rect x="273" y="456.15" width="7" height="0.800" fill="#a8a8ac"/><rect x="276.400" y="467.37" width="3.600" height="0.700" fill="#9a9a9e"/></svg>
<span class="t" style="left:297.3px;top:45px;font-size:5.2px;color:#b4b4b8">120</span>
<span class="t" style="left:319.7px;top:45px;font-size:5.2px;color:#b4b4b8">180</span>
<span class="t" style="left:342.2px;top:45px;font-size:5.2px;color:#b4b4b8">240</span>
<span class="t" style="left:364.7px;top:45px;font-size:5.2px;color:#b4b4b8">300</span>
<span class="t" style="left:387.1px;top:45px;font-size:5.2px;color:#b4b4b8">360</span>
<span class="t" style="left:409.5px;top:45px;font-size:5.2px;color:#b4b4b8">420</span>
<span class="t" style="left:432.0px;top:45px;font-size:5.2px;color:#b4b4b8">480</span>
<span class="t" style="left:454.4px;top:45px;font-size:5.2px;color:#b4b4b8">540</span>
<span class="t" style="left:476.9px;top:45px;font-size:5.2px;color:#b4b4b8">600</span>
<span class="t" style="left:499.3px;top:45px;font-size:5.2px;color:#b4b4b8">660</span>
<span class="t" style="left:521.8px;top:45px;font-size:5.2px;color:#b4b4b8">720</span>
<span class="t" style="left:544.3px;top:45px;font-size:5.2px;color:#b4b4b8">780</span>
<span class="t" style="left:566.7px;top:45px;font-size:5.2px;color:#b4b4b8">840</span>
<span class="t" style="left:273.400px;top:73.5px;font-size:5.2px;color:#b4b4b8;transform:rotate(-90deg);transform-origin:0 0">120</span>
<span class="t" style="left:273.400px;top:96.0px;font-size:5.2px;color:#b4b4b8;transform:rotate(-90deg);transform-origin:0 0">180</span>
<span class="t" style="left:273.400px;top:118.4px;font-size:5.2px;color:#b4b4b8;transform:rotate(-90deg);transform-origin:0 0">240</span>
<span class="t" style="left:273.400px;top:140.8px;font-size:5.2px;color:#b4b4b8;transform:rotate(-90deg);transform-origin:0 0">300</span>
<span class="t" style="left:273.400px;top:163.3px;font-size:5.2px;color:#b4b4b8;transform:rotate(-90deg);transform-origin:0 0">360</span>
<span class="t" style="left:273.400px;top:185.8px;font-size:5.2px;color:#b4b4b8;transform:rotate(-90deg);transform-origin:0 0">420</span>
<span class="t" style="left:273.400px;top:208.2px;font-size:5.2px;color:#b4b4b8;transform:rotate(-90deg);transform-origin:0 0">480</span>
<span class="t" style="left:273.400px;top:230.7px;font-size:5.2px;color:#b4b4b8;transform:rotate(-90deg);transform-origin:0 0">540</span>
<span class="t" style="left:273.400px;top:253.1px;font-size:5.2px;color:#b4b4b8;transform:rotate(-90deg);transform-origin:0 0">600</span>
<span class="t" style="left:273.400px;top:275.5px;font-size:5.2px;color:#b4b4b8;transform:rotate(-90deg);transform-origin:0 0">660</span>
<span class="t" style="left:273.400px;top:298.0px;font-size:5.2px;color:#b4b4b8;transform:rotate(-90deg);transform-origin:0 0">720</span>
<span class="t" style="left:273.400px;top:320.4px;font-size:5.2px;color:#b4b4b8;transform:rotate(-90deg);transform-origin:0 0">780</span>
<span class="t" style="left:273.400px;top:342.9px;font-size:5.2px;color:#b4b4b8;transform:rotate(-90deg);transform-origin:0 0">840</span>
<span class="t" style="left:273.400px;top:365.3px;font-size:5.2px;color:#b4b4b8;transform:rotate(-90deg);transform-origin:0 0">900</span>
<span class="t" style="left:273.400px;top:387.8px;font-size:5.2px;color:#b4b4b8;transform:rotate(-90deg);transform-origin:0 0">960</span>
<span class="t" style="left:273.400px;top:410.2px;font-size:5.2px;color:#b4b4b8;transform:rotate(-90deg);transform-origin:0 0">1020</span>
<span class="t" style="left:273.400px;top:432.7px;font-size:5.2px;color:#b4b4b8;transform:rotate(-90deg);transform-origin:0 0">1080</span>
<span class="t" style="left:273.400px;top:455.1px;font-size:5.2px;color:#b4b4b8;transform:rotate(-90deg);transform-origin:0 0">1140</span>
<div class="a" id="canvas"></div>
<div class="a" style="left:272px;top:463.600px;width:308px;height:1.400px;background:#6a6a6c"></div>
<svg id="char" style="left:0;top:0" width="799" height="465" viewBox="0 0 799 465">
<defs>
 <linearGradient id="gHairL" gradientUnits="userSpaceOnUse" x1="386" y1="212" x2="353" y2="249">
  <stop offset="0" stop-color="#625e68"/><stop offset="0.500" stop-color="#4e4853"/><stop offset="1" stop-color="#c7608f"/>
 </linearGradient>
 <linearGradient id="gHairR" gradientUnits="userSpaceOnUse" x1="470" y1="208" x2="503" y2="243">
  <stop offset="0" stop-color="#625e68"/><stop offset="0.500" stop-color="#4e4853"/><stop offset="1" stop-color="#c7608f"/>
 </linearGradient>
 <linearGradient id="gBang" gradientUnits="userSpaceOnUse" x1="0" y1="124" x2="0" y2="150">
  <stop offset="0" stop-color="#48434d"/><stop offset="1" stop-color="#705f64"/>
 </linearGradient>
 <linearGradient id="gIris" gradientUnits="userSpaceOnUse" x1="0" y1="151" x2="0" y2="171">
  <stop offset="0" stop-color="#1e2362"/><stop offset="0.400" stop-color="#2a3584"/><stop offset="0.520" stop-color="#4472d2"/><stop offset="0.700" stop-color="#3f9ee4"/><stop offset="0.850" stop-color="#3ccdee"/><stop offset="1" stop-color="#5fe6e6"/>
 </linearGradient>
<linearGradient id="gCap" gradientUnits="userSpaceOnUse" x1="0" y1="98" x2="0" y2="205"><stop offset="0" stop-color="#47434d"/><stop offset="0.250" stop-color="#4b4650"/><stop offset="1" stop-color="#625e68"/></linearGradient>
<clipPath id="capClip"><path d="M427.500,98 C404,98 386,112 382,136 C380.600,155 380.800,175 380.800,190 L394,193 C394.500,196 395.200,198.500 396,200.300 C397.500,203 399.500,205 402,206.800 C403.500,208 405.500,209 407.500,209.600 C407,208.500 406.500,207.500 406,206 C404.800,203.500 404,200.500 403.400,197.700 C402.500,194 401.600,191 401,188 C400,184 399.300,181 399,178 C398.500,175 398.500,172.500 398.500,170 C397.500,160 398,148 399,140 C400,134 402,128 404,124 L450,124 C453,128 456,134 457,140 C458,148 458.500,160 457.500,170 C457.500,174 457.300,177 457,180 C456.800,184 456.500,187 456,190 C455.500,193.500 455,196.500 454,199 C452.800,202.500 451,205.500 449,208 C451,207.800 453,207 454.700,206 C457,204 459.500,201 461,197.700 C462.200,196 463.200,194 464,192 L476,193 C475.500,175 476,155 474,136 C470,112 451,98 427.500,98 Z"/></clipPath>
</defs>
<!-- back hair pink -->
<g stroke="#1b181c" stroke-width="1.3" stroke-linejoin="round">
 <path fill="#ee6a9e" d="M400,112 C386,116 381,132 380.8,150 C380.6,175 381,195 380,209 C378.5,219 375,229 370,235 C365,240 356,246 341.500,249.400 C346,252 352,254.500 357,256 C361,257 365,257.500 368.600,257.500 C369,263 371,270 375.400,276.800 C380,271 383,266 385,260.500 C387,255 389,251 390,248.400 L412,252 L430,252 L430,180 Z"/>
 <path fill="#ee6a9e" d="M456,112 C470,116 474.500,132 475,150 C475.300,175 475.500,190 476,195 C476.500,200 477,204 478,206.800 C479,211 480,216 481.800,219.700 C484,225 486.500,229 489.500,232.600 C493,236.500 497,239 502.400,241 C507,242.600 512,243.300 518,243.500 C518.500,245 518,246.500 515.300,248 C512,251 509,253 507.600,253.600 C504,255 500,256 497.300,256.200 C495,257 493,257.600 491.300,257.900 C491,261 489,266 487,267.400 C486.500,271 485.500,274 484.400,276 C481,272 478.500,268 476.600,264 C474,259 471.500,254 469.700,250 L446,252 L426,252 L426,180 Z"/>
</g>
<!-- dark outer strands fading to pink -->
<path fill="url(#gHairL)" d="M400,112 C386,116 381,132 380.800,150 C380.600,175 381,195 380,209 C378.500,219 375,229 370,235 C366,239 362,242.500 356,245.500 C362,244.500 367,243 370,240.500 C374,238 377,235 379,232.500 C383,227.500 385.500,224 386.600,221.500 C389,217 391,212 391.800,209 C393,203 394,197 395.600,190 L404,160 Z"/>
<path fill="url(#gHairR)" d="M456,112 C470,116 474.500,132 475,150 C475.300,175 475.500,190 476,195 C476.500,200 477,204 478,206.800 C479,211 480,216 481.800,219.700 C484,225 486.500,229 489.500,232.600 C492,235.500 495,237.500 499,239.500 C496,239 494,238 492,236.500 C489,234.500 486,232.500 483,230 C480,227.500 477.500,225 475.300,222.300 C472.500,218.500 470.500,214 468.900,209.400 C466.500,203 465,196 463.700,190 L452,160 Z"/>
<!-- ears -->
<g stroke="#1b181c" stroke-width="1.3" stroke-linejoin="round" fill="#47424c">
 <path d="M387.4,77 C384,88 382,102 382.8,112 C383,118 384,121 385.5,124 L416,99 C408,92 397,83 387.4,77 Z"/>
 <path d="M463.5,75.5 C468,82 470,92 470.5,100 C471,108 471.5,114 471,122 L436,98 C445,90 454,82 463.5,75.5 Z"/>
</g>
<g fill="none" stroke="#8a8690" stroke-width="1.100" stroke-linecap="round" opacity="0.800">
 <path d="M388.600,79.600 C385.600,90 384.200,102 384.600,112 C384.800,116 385.400,119 386.400,121.500"/>
 <path d="M389.600,79.400 C397,84 405,90.500 412,96.500"/>
 <path d="M462.800,78 C466.400,84 468.400,92 468.900,100 C469.300,107 469.700,113 469.400,119.500"/>
 <path d="M461.800,77.800 C454,83 446.500,89.500 439.500,96"/>
</g>
<path fill="#ee6a9d" d="M395.7,88.6 C393,90 392.5,92 392,94 C390,96 389.5,98.5 389.5,101 C387.5,104 387,107 387.4,110 C388,113 390,114.5 392,114.8 C396,108 402,103 409.4,99.6 C408,97.5 406.5,95.5 404.6,94 C401.5,92 398.5,90 395.7,88.6 Z"/>
<path fill="#ee6a9d" d="M455.6,88 C458,89.5 460,91.5 460.4,94 C462.5,96 463.2,98.5 463,101 C465,104 466.2,107 466,110 C465.5,112.5 464.5,113.2 463,113.4 C458,107.5 451,102.5 443,99.6 C446.5,95 451,91 455.6,88 Z"/>
<!-- neck, body skin -->
<g stroke="#1b181c" stroke-width="1.1" stroke-linejoin="round" fill="#fcdfd3">
 <!-- legs -->
 <path stroke-width="1.500" d="M400.300,316 C400,330 399.800,342 399.300,352 C398.800,357 397.600,361 397.400,365.500 C397.400,372 399.200,379 401,385.400 C403,392 405,399 406,405.600 C406.800,410 407.200,414 407.400,428 L419.200,428 C419.200,414 419,410 419,405.600 C418.600,399 418.200,392 418.100,385.400 C418,379 418.200,372 418.400,365 C418.600,361 418.800,357 419,353.500 C419.500,342 420,330 420,316 Z"/>
 <path stroke-width="1.500" d="M436.200,316 C436.500,330 437,342 437.200,353.500 C437.300,357 437.400,361 437.500,365 C437.700,372 437.800,379 437.800,385.400 C437.900,392 437.900,399 437.800,405.600 C437.700,410 437.400,414 437.200,428 L450.300,428 C450.400,414 450.600,410 450.900,405.600 C451.600,399 452.400,392 453.200,385.400 C454.600,379 455.800,372 456,365 C456,361 455.600,357 455.200,353.500 C455.500,342 456,330 456.200,316 Z"/>
 <!-- neck + shoulders -->
 <path d="M422,183 L421.700,192.500 C417,196 411,199 404.600,201.500 C402.500,202.500 401,203.800 400,205.500 L412,213 L446,213 L455.600,205.500 C454.600,203.600 453,202.300 451,201.300 C445,199 439,196 434,192.500 L434,183 Z"/>
</g>
<!-- leg shading -->
<path fill="#f4aea6" d="M401.200,318 L419.400,318 L419.200,325 C414,327.500 407,327.500 401,324.500 Z"/><path fill="#f9cfc4" d="M399.800,354 C398.800,360 398.600,366 399.600,372 C401,380 403,388 405,396 C402,384 401.500,368 403,354 Z"/>
<path fill="#f8bfb4" d="M435.5,319 L454.5,319 L454.5,326 C448,328 441,328 435.5,325 Z"/>
<path fill="#f8c4b8" d="M423,186 L433,186 L433,190 C430,192 426,192 423,190 Z"/>
<!-- shoes -->
<g fill="#0b0b0d">
 <path fill-rule="evenodd" d="M405,421.500 C406.500,418.600 410,416.800 413.800,416.800 C417.600,416.800 420.600,418.400 421.800,421 C423.200,425 424,430 423.900,435.500 C423.600,438 420.500,438.800 413.500,438.800 C406.500,438.800 403.400,438 403.100,435.500 C403,430 403.600,425.500 405,421.500 Z M407.300,426 C408.600,423 410.800,421.200 413.300,421.200 C415.900,421.200 418,423 419.100,426 Z"/>
 <path fill-rule="evenodd" d="M435.600,421.500 C437,418.600 440.500,417 444.300,417 C448.100,417 451,418.600 452.200,421.200 C453.600,425 454.300,430 454.200,435.500 C453.900,438 451,438.800 444,438.800 C437,438.800 434,438 433.700,435.500 C433.600,430 434.200,425.500 435.600,421.500 Z M438,425.800 C439.300,423 441.500,421.400 444.100,421.400 C446.700,421.400 449,423 450.200,425.800 Z"/>
</g>
<!-- green ground line (over shoes) -->
<rect x="351" y="434" width="149.500" height="1.900" fill="#3fdc1c"/>
<!-- dress -->
<path fill="#ffffff" stroke="#1b181c" stroke-width="1.100" stroke-linejoin="round" d="M413.700,208.700 C420,205.300 438,205.300 444.600,208.700 C445,217 445,227 444.400,236 C446,241 448,245 450.800,250 C454,254 457.500,258 461,262 C465,268 469,274 473,279.400 C476,285 478,291 480,296.600 C481.500,299 482.500,301 483.500,303.500 L488,309.500 C487,312 485,313.500 483,313.600 C480,316.500 474,317.400 470,315.800 C465,318.600 458,318.800 454,317 C449,319.600 442,319.800 437,317.800 C432,320 425,320 420,318 C415,320 408,320 403,317.800 C398,319.400 391,319 387,317 C382,317.400 377,316.400 374,314.400 C371,314 369,313 367.700,311.300 L378,307 C380,303 382.500,300 384.900,296.600 C387,291 389.500,285 391.800,279.400 C394,273 396,268 398.700,262.200 C401,258 404,255 407.300,252 C410,247 413,241 415.500,236 C414.500,227 413.700,217 413.700,208.700 Z"/>
<!-- dress shading -->
<g stroke="#d2d2da" stroke-width="1.500" fill="none" stroke-linecap="round">
 <path d="M394,284 C392.500,290 391,296 390,301"/>
 <path d="M446,277 C448.500,285 450.500,294 451.500,303"/>
 <path d="M465,285 C469,293 472.500,301 475,310"/>
 <path d="M421,215 C420,222 419,228 419,233"/>
</g>
<!-- bow -->
<path fill="#1a1a1c" d="M430,239.600 C428,236 423.500,234 419.600,234.500 C417,235 416.500,238 416.800,241 C417.100,244.600 418.400,247 420.600,247.200 C423,246.800 425.600,245.600 427.600,244.400 C426,247.600 423,251 419.200,253.200 C421,254.800 425,255 427.800,253.800 C428.800,252 429.500,250 430,247.800 C430.500,250 431.200,252 432.200,253.800 C435,255 438.500,254.800 440.600,253.200 C437,251 434,247.600 432.400,244.400 C434.400,245.600 437,246.800 439.400,247.200 C441.600,247 442.900,244.600 443.200,241 C443.500,238 443,235 440.400,234.500 C436.500,234 432,236 430,239.600 Z"/>
<path fill="none" stroke="#1a1a1c" stroke-width="0.700" d="M417,242 L414,242.800 M443,242 L445.600,242.800"/>
<!-- arms -->
<g fill="#fcdfd3">
 <path d="M404.600,201.500 C402,202.800 400.600,204.500 400.300,207 C400.100,210 400.300,213 400.800,215.800 C399.800,220 399,224.500 398.200,228.700 C397,233 395.600,237.500 394.400,241.600 C393.500,244 392.500,246.500 391.800,248.400 C390,255 388.500,261 386.600,267.400 C385,273 383.500,278 381.500,282.900 C379.500,287 377,290.500 373.700,293.200 C370,295.500 365,297 360.800,298.400 C358.600,300 357.800,303 358.200,305.500 C358.800,308 360,310 362.500,311 C365,312 368,311.800 370,311 C373,310 376,308.800 378,307 C380.500,303.500 382.800,300 384.900,296.600 C387.500,291 389.800,285 391.800,279.400 C394,273.500 396.500,268 398.700,262.200 C401,256.500 403.500,251 405.600,245 C407,241 408.200,237.500 409.200,233.900 C410.200,230.500 411,227 411.800,223.500 C412.500,218.500 413.200,213 413.700,208 Z"/>
 <path d="M451,201.300 C453.500,202.500 455,204.500 455.400,207 C456,211 457,215.500 458,219.700 C459.300,224 460.200,228.500 461,232.600 C462,238 463.500,244 465,250 C466.800,254 469,258 471.500,262.200 C473.500,266 475,270 476.600,274.300 C478.500,279.500 480.500,284.500 482.700,289.700 C484.500,292.500 487,294 489.500,294.600 C493,295 496.500,296 498.500,298.500 C500.500,301.500 500.500,305.500 499.500,308.500 C498,311 495.500,312.200 492.500,312 C489.500,311.600 487.500,310.500 486,308.500 C484.800,306.800 484,305.200 483.500,303.500 C482.500,301 481.200,298.800 480,296.600 C478,291 475.500,285 473,279.400 C469,273.500 465,267.500 461,262 C457,258 453.500,254 450.800,250 C449.800,243 449,236 448.200,228.700 C447.500,222.500 446.800,216.500 446.300,210.600 C446,209 445.200,208 444.600,207.500 Z"/>
</g>
<g stroke="#1b181c" stroke-width="1.100" stroke-linejoin="round" stroke-linecap="round" fill="none">
 <path d="M404.600,201.500 C402,202.800 400.600,204.500 400.300,207 C400.100,210 400.300,213 400.800,215.800 C399.800,220 399,224.500 398.200,228.700 C397,233 395.600,237.500 394.400,241.600 C393.500,244 392.500,246.500 391.800,248.400 C390,255 388.500,261 386.600,267.400 C385,273 383.500,278 381.500,282.900 C379.500,287 377,290.500 373.700,293.200 C370,295.500 365,297 360.800,298.400 C358.600,300 357.800,303 358.200,305.500 C358.800,308 360,310 362.500,311 C365,312 368,311.800 370,311 C373,310 376,308.800 378,307 C380.500,303.500 382.800,300 384.900,296.600 C387.500,291 389.800,285 391.800,279.400 C394,273.500 396.500,268 398.700,262.200 C401,256.500 403.500,251 405.600,245 C407,241 408.200,237.500 409.200,233.900 C410.200,230.500 411,227 411.800,223.500 C412.500,218.500 413.200,213 413.700,208"/>
 <path d="M451,201.300 C453.500,202.500 455,204.500 455.400,207 C456,211 457,215.500 458,219.700 C459.300,224 460.200,228.500 461,232.600 C462,238 463.500,244 465,250 C466.800,254 469,258 471.500,262.200 C473.500,266 475,270 476.600,274.300 C478.500,279.500 480.500,284.500 482.700,289.700 C484.500,292.500 487,294 489.500,294.600 C493,295 496.500,296 498.500,298.500 C500.500,301.500 500.500,305.500 499.500,308.500 C498,311 495.500,312.200 492.500,312 C489.500,311.600 487.500,310.500 486,308.500 C484.800,306.800 484,305.200 483.500,303.500 C482.500,301 481.200,298.800 480,296.600 C478,291 475.500,285 473,279.400 C469,273.500 465,267.500 461,262 C457,258 453.500,254 450.800,250 C449.800,243 449,236 448.200,228.700 C447.500,222.500 446.800,216.500 446.300,210.600 C446,209 445.200,208 444.600,207.500"/>
</g>
<!-- knuckle tint -->
<path fill="#f6aaa4" d="M359,301 C358,303.500 358.600,307.500 361,309.800 C363,310.800 365,310.800 366.500,310 C364,307.500 362.800,304.500 363,301 C361.600,300.200 360,300.200 359,301 Z"/>
<path fill="#f6aaa4" d="M497.500,298.500 C499.500,301 499.800,305 498.500,308 C496.500,310.800 494,311.200 492,310.600 C494,308 495,304.500 494.500,300 C495.500,298.600 496.600,298 497.500,298.500 Z"/>
<!-- halter straps -->
<g fill="none" stroke-linecap="round" stroke-linejoin="round">
 <path d="M414.600,208 C414.800,204 415.400,200.500 416.200,197.600 C417.600,194.600 419.600,192.200 421.600,190.600" stroke="#8a8a94" stroke-width="1.900"/>
 <path d="M414.600,208 C414.800,204 415.400,200.500 416.200,197.600 C417.600,194.600 419.600,192.200 421.600,190.600" stroke="#f4f4f8" stroke-width="1.100"/>
 <path d="M443.600,208 C443.200,204 442.400,200.500 441,197.600 C439.400,194.600 437,192.200 434.600,190.600" stroke="#8a8a94" stroke-width="1.900"/>
 <path d="M443.600,208 C443.200,204 442.400,200.500 441,197.600 C439.400,194.600 437,192.200 434.600,190.600" stroke="#f4f4f8" stroke-width="1.100"/>
 <path d="M415.400,196.600 C416.600,193.600 418.400,191.400 420.400,189.800M442,196.600 C440.600,193.600 438.400,191.200 436,189.600" stroke="#6a62e6" stroke-width="0.800" stroke-dasharray="1.200 0.800" opacity="0.800"/>
</g>
<!-- sketch lines (blue) -->
<g fill="none" stroke="#5b55e0" stroke-width="0.600" opacity="0.600">
 <path d="M447.300,197 C447,206 448,216 449.500,228 C450.500,238 451.500,244 453.400,248.500 C458,256 464,262 469.700,269 C474,276 477.500,284 480,291.500 C483,297 486,301.500 488.700,305"/>
 <path d="M448.600,199 C448.400,207 449.400,217 450.800,229 C451.800,239 453,245 455,249.500 C459.500,257 465.500,263 471,270 C475.300,277 478.800,285 481.400,292.500 C484,298 487,302.500 490,306.500"/>
 <path d="M414.500,214 C413.500,222 412.500,228 411.500,233 C411,238 411.500,243 411,248"/>
 <path stroke-width="1" d="M421.200,320 C421,340 420.400,355 420,365 C419.600,380 419.800,395 420.600,405.600 C421,412 421.400,418 423,424"/>
 <path stroke-width="1" d="M457.400,320 C457,335 456.800,345 456.800,353.500 C457.400,362 457.400,372 455.200,385.400 C453.600,395 452.800,405 452.400,412 C452.400,416 452.800,420 454,424"/>
</g>
<!-- face -->
<path fill="#fde6dc" stroke="#1b181c" stroke-width="1.300" d="M398,135 C397,150 397.500,160 398.600,167 C400,176.500 408,183.200 428,186.200 C448,183.200 456,176.500 457.600,167 C458.500,160 459,150 458,135 C450,120 406,120 398,135 Z"/>
<!-- blush -->
<ellipse cx="407" cy="173.600" rx="5.400" ry="2.800" fill="#f8b8b0" opacity="0.750"/>
<ellipse cx="450" cy="172.600" rx="5.400" ry="2.800" fill="#f8b8b0" opacity="0.750"/>
<g stroke="#f08c88" stroke-width="0.500" opacity="0.800"><path d="M404,175.200l1.200,-3.200M406.400,175.400l1.200,-3.200M408.800,175.400l1.200,-3.200M447.400,174.200l1.200,-3.200M449.800,174.400l1.200,-3.200M452.200,174.200l1.200,-3.200"/></g>
<!-- eyes -->
<g>
 <path fill="#ffffff" d="M400.200,159 C400.600,153 406,149.400 412,149.400 C417.500,149.400 421,153 421,159 C421,166 418,171 412,171 C405,171 400.200,166 400.200,159 Z"/>
 <path fill="#ffffff" d="M436.800,158.600 C436.800,152.600 440.500,149 446,149 C452,149 456.600,152.600 456.900,158.600 C456.900,165.600 452.500,170.600 446,170.600 C440,170.600 436.800,165.600 436.800,158.600 Z"/>
 <ellipse cx="412.900" cy="161.200" rx="7" ry="9.600" fill="url(#gIris)"/>
 <ellipse cx="444" cy="160.400" rx="6.600" ry="9.700" fill="url(#gIris)"/>
 <g fill="#d8f06a"><rect x="410.400" y="165.400" width="0.700" height="2.400"/><rect x="412.200" y="164.800" width="0.700" height="2.800"/><rect x="414.200" y="164.200" width="0.700" height="2.200"/><rect x="441.400" y="165" width="0.700" height="2.400"/><rect x="443.200" y="164.400" width="0.700" height="2.800"/><rect x="445.200" y="163.800" width="0.700" height="2.200"/></g>
 <circle cx="415" cy="158.300" r="1.800" fill="#fff"/>
 <circle cx="445.700" cy="157.200" r="1.800" fill="#fff"/>
 <path fill="none" stroke="#38222a" stroke-width="2.100" stroke-linecap="round" d="M399.600,156 C401,151.600 404,149.200 408,148.400 C412,147.600 416,148.600 419.600,151"/>
 <path fill="none" stroke="#38222a" stroke-width="2.100" stroke-linecap="round" d="M437.400,150.600 C440.500,148.200 444.500,147.400 448.500,148 C453,148.800 456,151.400 457.400,155.600"/>
 <path fill="none" stroke="#6a3a3e" stroke-width="0.800" d="M400,158 C400,163 401.500,167 404,169.500"/>
 <path fill="none" stroke="#6a3a3e" stroke-width="0.800" d="M457.600,158 C457.600,163 456.400,167 454,169.500"/>
 <path fill="none" stroke="#e0a090" stroke-width="0.700" d="M402,146.600 C405,144.600 409,144 413,144.400M442,144 C446,143.400 450,144 454,146"/>
</g>
<!-- mouth -->
<path fill="none" stroke="#5a3b3b" stroke-width="0.9" stroke-linecap="round" d="M424.400,174.800 C425.600,173.400 427,173.400 428,174.400 C429,173.400 430.400,173.400 431.600,174.800"/>
<!-- front dark hair: head cap + side strands -->
<path fill="url(#gCap)" d="M427.500,98 C404,98 386,112 382,136 C380.600,155 380.800,175 380.800,190 L394,193 C394.500,196 395.200,198.500 396,200.300 C397.500,203 399.500,205 402,206.800 C403.500,208 405.500,209 407.500,209.600 C407,208.500 406.500,207.500 406,206 C404.800,203.500 404,200.500 403.400,197.700 C402.500,194 401.600,191 401,188 C400,184 399.300,181 399,178 C398.500,175 398.500,172.500 398.500,170 C397.500,160 398,148 399,140 C400,134 402,128 404,124 L450,124 C453,128 456,134 457,140 C458,148 458.500,160 457.500,170 C457.500,174 457.300,177 457,180 C456.800,184 456.500,187 456,190 C455.500,193.500 455,196.500 454,199 C452.800,202.500 451,205.500 449,208 C451,207.800 453,207 454.700,206 C457,204 459.500,201 461,197.700 C462.200,196 463.200,194 464,192 L476,193 C475.500,175 476,155 474,136 C470,112 451,98 427.500,98 Z"/>
<path d="M341.500,249.400 C356,246 365,240 370,235 C375,229 378.500,219 380,209 C381,195 380.600,175 380.800,150 C380.900,145 381.300,140 382,136 C386,112 404,98 427.500,98 C451,98 470,112 474,136 C474.600,140 474.900,145 475,150 C475.300,175 475.500,190 476,195 C476.500,200 477,204 478,206.800 C479,211 480,216 481.800,219.700 C484,225 486.500,229 489.500,232.600 C493,236.500 497,239 502.400,241 C507,242.600 512,243.300 518,243.500" fill="none" stroke="#827e88" stroke-width="3.600" clip-path="url(#capClip)" opacity="0.750"/>
<g fill="none" stroke="#2c2830" stroke-width="0.700" stroke-linecap="round" opacity="0.850">
 <path d="M392.500,118 C388,138 387.500,168 390.500,192"/>
 <path d="M397.500,140 C396,160 396.500,178 400,196"/>
 <path d="M463.500,118 C468,138 468.500,168 466,190"/>
 <path d="M458.500,140 C460,160 459.500,178 456,196"/>
</g>

<g fill="none" stroke="#1b181c" stroke-width="1.300" stroke-linejoin="round" stroke-linecap="round">
 <path d="M341.500,249.400 C356,246 365,240 370,235 C375,229 378.500,219 380,209 C381,195 380.600,175 380.800,150 C380.900,145 381.300,140 382,136 C386,112 404,98 427.500,98 C451,98 470,112 474,136 C474.600,140 474.900,145 475,150 C475.300,175 475.500,190 476,195 C476.500,200 477,204 478,206.800 C479,211 480,216 481.800,219.700 C484,225 486.500,229 489.500,232.600 C493,236.500 497,239 502.400,241 C507,242.600 512,243.300 518,243.500"/>
 <path stroke-width="1" d="M394,193 C394.500,196 395.200,198.500 396,200.300 C397.500,203 399.500,205 402,206.800 C403.500,208 405.500,209 407.500,209.600 C407,208.500 406.500,207.500 406,206 C404.800,203.500 404,200.500 403.400,197.700 C402.500,194 401.600,191 401,188 C400,184 399.300,181 399,178 C398.500,175 398.500,172.500 398.500,170"/>
 <path stroke-width="1" d="M464,192 C463.200,194 462.200,196 461,197.700 C459.500,201 457,204 454.700,206 C453,207 451,207.800 449,208 C451,205.500 452.800,202.500 454,199 C455,196.500 455.500,193.500 456,190 C456.500,187 456.800,184 457,180 C457.300,177 457.500,174 457.500,170"/>
 <path stroke-width="0.800" d="M394,193 C392.500,200 391.800,205 391.800,209 C390,215 388,219 386.600,221.500"/>
 <path stroke-width="0.800" d="M464,192 C465,198 466.500,203 468.900,209.400 C470.500,214 472.500,218.500 475.300,222.300"/>
</g>
<!-- bangs -->
<path fill="url(#gBang)" d="M402,122 C400,130 399,138 399,148 C400.500,148.500 401.500,147.500 402.500,146 C403.500,144.500 404.400,143 405,141 C405.600,139 406.200,137 407,135 C407.600,133 408.200,131.500 409,130 C410.500,127.500 412,125.500 413.900,123.400 L414.500,127 C415,130 415.800,132.500 416.900,135 C418.200,138 420,140.500 422.200,142.300 C424.500,144.600 427.500,146.400 430.500,147 C433.500,145.800 436.500,143.800 438.700,141 C440.800,138.600 442.200,135.800 442.900,132.800 C443.300,130.500 443.500,128 443.500,125.700 L445.200,124.500 C445.600,128 446.200,131 447,134 C447.900,137 449.100,139.800 450.600,142.300 C451.600,144.100 452.800,145.700 454,147 C455.200,148.600 456.500,150.600 457.600,152.500 C458.500,145 458,132 455,122 C445,112 412,112 402,122 Z"/>
<path fill="none" stroke="#1b181c" stroke-width="0.900" stroke-linejoin="round" stroke-linecap="round" d="M399,148 C400.500,148.500 401.500,147.500 402.500,146 C403.500,144.500 404.400,143 405,141 C405.600,139 406.200,137 407,135 C407.600,133 408.200,131.500 409,130 C410.500,127.500 412,125.500 413.900,123.400 L414.500,127 C415,130 415.800,132.500 416.900,135 C418.200,138 420,140.500 422.200,142.300 C424.500,144.600 427.500,146.400 430.500,147 C433.500,145.800 436.500,143.800 438.700,141 C440.800,138.600 442.200,135.800 442.900,132.800 C443.300,130.500 443.500,128 443.500,125.700 L445.200,124.500 C445.600,128 446.200,131 447,134 C447.900,137 449.100,139.800 450.600,142.300 C451.600,144.100 452.800,145.700 454,147 C455.200,148.600 456.500,150.600 457.600,152.500"/>
<!-- pink streaks on head -->
<path fill="#ee6a9d" d="M410.400,110.200 C413,106.200 418.500,104.400 424.600,104.800 C425.600,106.200 425,107.800 423.400,108.200 C418.500,107.800 414,108.600 410.400,110.200 Z"/>
<path fill="#ee6a9d" d="M444.600,110.200 C442,106.200 437,104.400 432.800,104.800 C431.800,106.200 432.400,107.800 434,108.200 C437.500,107.800 441.500,108.600 444.600,110.200 Z"/>
<!-- hair highlights -->
<g fill="#b9c1d0">
 <ellipse cx="410.600" cy="116" rx="3" ry="4.500" transform="rotate(-18 410.600 116)"/>
 <rect x="417.200" y="115.600" width="3" height="10.200" rx="1.500" transform="rotate(6 418.700 120.700)"/>
 <path d="M421,118.400 C425.500,117 432,117 436.400,118.200 C436.700,122 436,125.800 434.200,127.800 C431,129.200 426.500,129.200 423.600,127.800 C421.800,125.400 421,122 421,118.400 Z"/>
 <rect x="436.600" y="115" width="3" height="9.600" rx="1.500" transform="rotate(-8 438.100 119.800)"/>
 <ellipse cx="445" cy="116" rx="3" ry="4.500" transform="rotate(18 445 116)"/>
</g>
</svg>
<!-- ===== top dock strip (right) ===== -->
<div class="a" style="left:580px;top:14px;width:219px;height:16px;background:#2b2b2b"></div>
<div class="a" style="left:582px;top:17px;width:3px;height:8px;background:#474747;border-radius:1px"></div>
<div class="a" style="left:607px;top:17px;width:3px;height:8px;background:#474747;border-radius:1px"></div>
<div class="a" style="left:636px;top:17px;width:3px;height:8px;background:#474747;border-radius:1px"></div>
<span class="t" style="left:596px;top:13.5px;font-size:11.500px;color:#686868;letter-spacing:-1px">»</span>
<span class="t" style="left:626px;top:13.5px;font-size:11.500px;color:#686868;letter-spacing:-1px">»</span>
<span class="t" style="left:758px;top:13.5px;font-size:11.500px;color:#686868">›</span>
<span class="t" style="left:775px;top:13.5px;font-size:11.500px;color:#686868;letter-spacing:-1px">»</span>
<span class="t" style="left:784px;top:13.5px;font-size:11.500px;color:#686868;letter-spacing:-1px">«</span>
<span class="t" style="left:792px;top:13.5px;font-size:11.500px;color:#686868;letter-spacing:-1px">«</span>

<!-- ===== brush size / opacity sliders ===== -->
<div class="a" style="left:593px;top:30px;width:12.400px;height:10px;background:#3f3f3f"></div>
<svg style="left:580px;top:30px" width="26" height="10" viewBox="580 30 26 10">
 <g stroke="#6a6a6a" stroke-width="0.8"><path d="M584.5,31h4.5M584.5,32.800h4.5M584.5,34.600h4.5"/></g>
 <g stroke="#e6e6e6" stroke-width="1.1"><path d="M599.3,31.5v8M602.8,31.5v8"/></g>
 <g fill="#e6e6e6"><rect x="598.2" y="35.5" width="2.2" height="2.2"/><rect x="601.7" y="32.8" width="2.2" height="2.2"/></g>
</svg>
<div class="a" id="sliderpanel"></div>
<div class="a" style="left:583.2px;top:42.7px;width:18px;height:18px;border-radius:9px;background:#222223"></div>
<span class="t" style="left:583.2px;top:44.6px;width:18px;text-align:center;font-size:7px;color:#f0f0f0">1.06</span>
<span class="t" style="left:583.2px;top:51.6px;width:18px;text-align:center;font-size:7px;color:#f0f0f0">mm</span>
<div class="a" style="left:591.2px;top:70px;width:2.2px;height:82px;background:#222223"></div>
<div class="a" style="left:590.9px;top:152px;width:2.8px;height:80px;background:#b2b2b2;border-radius:1.4px"></div>
<div class="a" style="left:585.4px;top:143.5px;width:13.6px;height:13.6px;border-radius:7px;background:#c6c6c6"></div>
<div class="a" style="left:583.5px;top:243.8px;width:18px;height:18px;border-radius:9px;background:#35dd1d"></div>
<span class="t" style="left:583.5px;top:246px;width:18px;text-align:center;font-size:6.4px;color:#1c3a16">100</span>
<span class="t" style="left:583.5px;top:253.4px;width:18px;text-align:center;font-size:6.4px;color:#1c3a16">%</span>
<div class="a" style="left:585.6px;top:264.4px;width:13.2px;height:13.2px;border-radius:7px;background:#b4b4b4"></div>
<svg style="left:589px;top:277px" width="8" height="158" viewBox="589 277 8 158">
 <defs>
  <pattern id="ck1" x="590.600" y="277" width="2.400" height="2.400" patternUnits="userSpaceOnUse"><rect width="2.400" height="2.400" fill="#e4e4e4"/><rect width="1.200" height="1.200" fill="#6a6a6a"/><rect x="1.200" y="1.200" width="1.200" height="1.200" fill="#6a6a6a"/></pattern>
  <linearGradient id="ckg" x1="0" y1="0" x2="0" y2="1"><stop offset="0" stop-color="#141414" stop-opacity="1"/><stop offset="0.25" stop-color="#141414" stop-opacity="0.9"/><stop offset="0.8" stop-color="#141414" stop-opacity="0"/></linearGradient>
 </defs>
 <rect x="590.600" y="277" width="4.800" height="157" rx="2.400" fill="url(#ck1)"/>
 <rect x="590.600" y="277" width="4.800" height="157" rx="2.400" fill="url(#ckg)"/>
</svg>

<!-- ===== tool palette ===== -->
<div class="a" style="left:619px;top:30px;width:13.5px;height:12px;background:#3f3f3f"></div>
<svg style="left:606px;top:30px" width="27" height="12" viewBox="606 30 27 12">
 <g stroke="#6a6a6a" stroke-width="0.8"><path d="M610.5,31h4.5M610.5,32.800h4.5M610.5,34.600h4.5"/></g>
 <path d="M622.3,39.6 L623,37.2 L629,31.2 L630.6,32.8 L624.6,38.8 Z" fill="#e6e6e6"/>
</svg>
<div class="a" id="toolpanel"></div>
<div class="a" style="left:609px;top:65px;width:19.5px;height:19.5px;background:#525c7c"></div>
<svg id="tools" style="left:606px;top:41px" width="27" height="424" viewBox="606 41 27 424" fill="none" stroke="#e0e0e0" stroke-width="1" stroke-linecap="round" stroke-linejoin="round">
 <!-- move -->
 <path d="M619,48.5v11M613.5,54h11" stroke-width="1.1"/>
 <path d="M617.2,50.2L619,48.2L620.8,50.2M617.2,57.8L619,59.8L620.8,57.8M615.2,52.2L613.2,54L615.2,55.8M622.8,52.2L624.8,54L622.8,55.8" stroke-width="0.9"/>
 <!-- selected line tool -->
 <path d="M613.5,80 L624,69.5" stroke="#f4f4f4" stroke-width="0.8"/>
 <!-- bow/ribbon tool -->
 <path d="M613.8,92.5l4,2l-1,3l-3.2,-1.4zM624.2,92.5l-4,2l1,3l3.2,-1.4z" fill="#e0e0e0" stroke="none"/>
 <path d="M617.5,97c-1,2-2.6,3.6-4,4.6M620.5,97c1,2 2.6,3.6 4,4.6M619,95.5v3" stroke-width="1.1"/>
 <!-- separator -->
 <path d="M609,108.5h19.5" stroke="#5a5a5a" stroke-width="0.8"/>
 <!-- lasso -->
 <ellipse cx="619.6" cy="118.2" rx="5.2" ry="3.8" transform="rotate(-18 619.6 118.2)" stroke-width="0.9" stroke="#cfcfcf"/>
 <path d="M615.6,121.2c-1.6,1-1.8,2.6-0.2,3.2c1.4,0.4 2.6,-0.4 3.6,-1.4" stroke-width="0.9" stroke="#cfcfcf"/>
 <!-- magic wand -->
 <path d="M613.5,147L619.5,141" stroke-width="1.3"/>
 <path d="M621,136v2.2M621,141.2v2.2M617.3,139.7h2.2M622.5,139.7h2.2M618.6,137.3l1.2,1.2M622.2,140.9l1.2,1.2M623.4,137.3l-1.2,1.2" stroke-width="0.8"/>
 <!-- eyedropper -->
 <path d="M614,168.5l1,-2.6l5,-5l1.8,1.8l-5,5z" stroke-width="0.9"/>
 <path d="M620,158.8l3,3l1.6,-1.6c0.8,-0.8 0.8,-2.2 0,-3c-0.8,-0.8 -2.2,-0.8 -3,0z" fill="#e0e0e0" stroke="none"/>
 <!-- pen -->
 <path d="M613.6,189.4l1,-5.2l5.8,-4.6l3.6,3.6l-4.6,5.8z" stroke-width="0.9"/>
 <path d="M613.8,189.2l4.2,-4.2" stroke-width="0.8"/>
 <path d="M620.8,178.6l1.6,-1.4l3.8,3.8l-1.4,1.6" stroke-width="0.9"/>
 <!-- eraser -->
 <path d="M614.2,206.6l6,-6l4.4,4.4l-6,6z" fill="#e0e0e0" stroke="none"/>
 <path d="M613.4,207.6l3.8,3.8h2l-4.8,-4.8z" fill="#9a9a9a" stroke="none"/>
 <path d="M614,212.6h10.6" stroke-width="0.8"/>
 <!-- blend (two drops) -->
 <path d="M616.6,222.6c-1.8,2.6-3,4.6-3,6.2c0,1.8 1.4,3 3,3c1.6,0 3,-1.2 3,-3c0,-1.6-1.2,-3.6-3,-6.2z" fill="#bdbdbd" stroke="none"/>
 <path d="M621.6,222.6c-1.8,2.6-3,4.6-3,6.2c0,1.8 1.4,3 3,3c1.6,0 3,-1.2 3,-3c0,-1.6-1.2,-3.6-3,-6.2z" fill="#8e8e8e" stroke="none"/>
 <!-- fill bucket -->
 <path d="M612.8,249.6l6.2,-5.6l6.2,5.6l-6.2,5.8z" fill="#e0e0e0" stroke="none"/>
 <path d="M614.6,249.6l4.4,-4l4.4,4z" fill="#3e3e3e" stroke="none"/>
 <path d="M625.4,251.4c0.8,1.2 1.2,2 1.2,2.6a1.2,1.2 0 0 1 -2.4,0c0,-0.6 0.4,-1.4 1.2,-2.6z" fill="#e0e0e0" stroke="none"/>
 <!-- grid / mesh -->
 <rect x="613.2" y="264.6" width="11.6" height="11.6" rx="2.4" stroke-width="0.9"/>
 <path d="M617,264.8c0.8,4 0.8,7.4 0,11.2M621,264.8c0.8,4 0.8,7.4 0,11.2M613.4,268.4c4,0.8 7.4,0.8 11.2,0M613.4,272.4c4,0.8 7.4,0.8 11.2,0" stroke-width="0.8"/>
 <!-- separator -->
 <path d="M609,284h19.5" stroke="#5a5a5a" stroke-width="0.8"/>
 <!-- triangle ruler -->
 <path d="M614,291.4h10.6l-10.6,10.6z" stroke-width="1.3"/>
 <!-- gradient -->
 <defs><linearGradient id="tg" x1="0" y1="0" x2="1" y2="1"><stop offset="0" stop-color="#e6e6e6"/><stop offset="1" stop-color="#555"/></linearGradient></defs>
 <rect x="613.8" y="312.4" width="10.6" height="10.6" rx="1" fill="url(#tg)" stroke="#9a9a9a" stroke-width="0.7"/>
 <!-- balloon -->
 <ellipse cx="619.4" cy="359.4" rx="5.6" ry="4.2" stroke-width="0.9"/>
 <path d="M616.2,362.6l-1.2,3.2l3.6,-2.4" stroke-width="0.9" fill="#3e3e3e"/>
 <!-- correct line -->
 <path d="M615.6,385.6L624,376.6" stroke-width="1.6"/>
 <path d="M613,387.4h11" stroke-width="0.8"/>
 <path d="M612.6,384.6l3.4,1.8l-3,1.6z" fill="#e0e0e0" stroke="none"/>
 <!-- hand -->
 <path d="M616.2,409.6c-1.4,-1.6 -2.6,-3.4 -3.4,-5c-0.4,-1 0.8,-1.6 1.6,-0.6l1.4,1.8v-5.6c0,-1 1.4,-1 1.4,0v-1.6c0,-1 1.5,-1 1.5,0v1.2c0,-1 1.5,-1 1.5,0v1.4c0,-0.9 1.4,-0.9 1.4,0.1v4.8c0,1.6 -0.4,2.6 -1,3.5z" fill="#dcdcdc" stroke="none"/>
</svg>
<span class="t" style="left:612.6px;top:331.6px;font-size:14.5px;color:#e4e4e4">A</span>
<!-- colour swatches -->
<div class="a" style="left:616.6px;top:427px;width:15px;height:15px;background:#4a1515;border:1px solid #5a5a5a"></div>
<div class="a" style="left:606.8px;top:418.6px;width:16px;height:15.6px;background:#3fe01a;border:1px solid #8a9be0;border-radius:1.5px"></div>
<svg style="left:607px;top:444px" width="25" height="8" viewBox="0 0 25 8">
 <defs><pattern id="ck2" x="1" y="1" width="6" height="6" patternUnits="userSpaceOnUse"><rect width="6" height="6" fill="#f6f6f6"/><rect width="3" height="3" fill="#7a7a7a"/><rect x="3" y="3" width="3" height="3" fill="#7a7a7a"/></pattern></defs>
 <rect x="1" y="1" width="22.600" height="6" fill="url(#ck2)"/><rect x="0.400" y="0.400" width="23.800" height="7.200" rx="1.400" fill="none" stroke="#5a5a5a" stroke-width="0.800"/>
</svg>
<!-- ===== Layer panel ===== -->
<div class="a" style="left:648px;top:30px;width:32px;height:10px;background:#404040"></div>
<svg style="left:634px;top:30px" width="46" height="10" viewBox="634 30 46 10" fill="none">
 <g stroke="#6a6a6a" stroke-width="0.8"><path d="M638.5,31h4.5M638.5,32.800h4.5M638.5,34.600h4.5"/></g>
 <g stroke="#e6e6e6" stroke-width="0.8" stroke-linejoin="round"><path d="M655,31.4l3.6,1.8l-3.6,1.8l-3.6,-1.8z" fill="#404040"/><path d="M651.4,35.2l3.6,1.8l3.6,-1.8M651.4,37.2l3.6,1.8l3.6,-1.8"/></g>
</svg>
<span class="t" style="left:663.6px;top:31.47px;font-size:7.2px;color:#f0f0f0;font-weight:bold;transform:scaleX(0.831);transform-origin:0 0;">Capa</span>
<div class="a" id="layerpanel"></div>
<!-- row 1 -->
<div class="a" style="left:634.5px;top:42px;width:22.5px;height:13.6px;background:#4b4b4b;border:1px solid #5c5c5c;border-radius:1px"></div>
<div class="a" style="left:659.6px;top:42px;width:47.6px;height:13.6px;background:#4b4b4b;border:1px solid #5c5c5c;border-radius:1px"></div>
<div class="a" style="left:637.6px;top:44.6px;width:9px;height:8.4px;border:1px solid #777;border-radius:1.5px;background:#444"></div>
<svg style="left:634px;top:40px" width="148" height="48" viewBox="634 40 148 48" fill="none" stroke="#dcdcdc" stroke-width="0.9" stroke-linecap="round" stroke-linejoin="round">
 <path d="M649.6,47.6l2.4,2.4l2.4,-2.4"/>
 <path d="M699,47.6l2.6,2.6l2.6,-2.6"/>
 <defs>
  <pattern id="ck3" x="711" y="44.5" width="4" height="4" patternUnits="userSpaceOnUse"><rect width="4" height="4" fill="#e6e6e6"/><rect width="2" height="2" fill="#5e5e5e"/><rect x="2" y="2" width="2" height="2" fill="#5e5e5e"/></pattern>
  <linearGradient id="opg" x1="0" y1="0" x2="1" y2="0"><stop offset="0" stop-color="#f4f4f4" stop-opacity="0"/><stop offset="0.850" stop-color="#f4f4f4" stop-opacity="0.950"/><stop offset="1" stop-color="#f4f4f4" stop-opacity="1"/></linearGradient>
 </defs>
 <rect x="711" y="44.6" width="46.5" height="6.4" fill="url(#ck3)" stroke="none"/>
 <rect x="711" y="44.6" width="46.5" height="6.4" fill="url(#opg)" stroke="none"/>
 <rect x="757.4" y="42.4" width="1.6" height="12" fill="#c8c8c8" stroke="none"/>
 <path d="M775.4,45.6l1.8,-1.8l1.8,1.8M775.4,49.6l1.8,1.8l1.8,-1.8" stroke-width="0.8"/>
 <!-- row 2 icons -->
 <g>
  <rect x="642.6" y="61.6" width="6" height="6" rx="1" fill="#bdbdbd" stroke="none"/>
  <rect x="644.6" y="59.6" width="6" height="6" rx="1" stroke="#dcdcdc" stroke-width="0.8"/>
  <!-- lighthouse -->
  <path d="M661.6,68.6l0.8,-5.6h1.4l0.8,5.6z" fill="#dcdcdc" stroke="none"/>
  <path d="M661.8,62h2.6v-1.8l-1.3,-1l-1.3,1z" fill="#dcdcdc" stroke="none"/>
  <path d="M660.6,61.2l-2.4,-1M660.6,62.4l-2.4,1M665.6,61.2l2.4,-1M665.6,62.4l2.4,1" stroke-width="0.7"/>
  <!-- bucket ref -->
  <path d="M677.4,59.6h3.6v6.4h-3.6z" fill="#dcdcdc" stroke="none"/>
  <path d="M678.4,61h1.6v2h-1.6z" fill="#404040" stroke="none"/>
  <path d="M681.6,66.6c0.8,1.2 1.8,1.6 3,1.4" stroke-width="0.8"/>
  <path d="M677.4,67.4h3" stroke-width="0.8"/>
  <!-- lock -->
  <rect x="693.6" y="62.6" width="6.8" height="5.4" rx="0.8" fill="#dcdcdc" stroke="none"/>
  <path d="M695.2,62.6v-1.4a1.8,1.8 0 0 1 3.6,0v1.4" stroke-width="1"/>
  <!-- checker lock -->
  <g fill="#dcdcdc" stroke="none"><rect x="710.2" y="60" width="2.2" height="2.2"/><rect x="714.6" y="60" width="2.2" height="2.2"/><rect x="712.4" y="62.2" width="2.2" height="2.2"/><rect x="716.6" y="62.2" width="1.6" height="2.2"/><rect x="710.2" y="64.4" width="2.2" height="2.2"/><rect x="714.6" y="64.4" width="2.2" height="2.2"/><rect x="712.4" y="66.6" width="2.2" height="1.8"/></g>
  <!-- mask dim -->
  <rect x="724.6" y="57.6" width="18" height="13.6" rx="1" fill="#464646" stroke="none"/>
  <rect x="744" y="57.6" width="17" height="13.6" rx="1" fill="#464646" stroke="none"/>
  <g stroke="#6e6e6e" stroke-width="0.9"><rect x="727.6" y="60.4" width="6.6" height="6.6" rx="1"/><circle cx="731" cy="63.8" r="1.8"/><path d="M733.4,67.2l2.4,2.4M735.8,67.2l-2.4,2.4M736.6,62.4l1.8,1.8l1.8,-1.8"/></g>
  <g stroke="#6e6e6e" stroke-width="0.9"><path d="M747.4,60.4h6.6l-6.6,6.6z"/><path d="M753,67.2l2.4,2.4M755.4,67.2l-2.4,2.4M756.2,62.4l1.8,1.8l1.8,-1.8"/></g>
  <!-- colour display -->
  <rect x="762.6" y="57.4" width="18.6" height="14.4" rx="1" fill="#4d4d4d" stroke="#626262" stroke-width="0.8"/>
  <rect x="767" y="62.4" width="6.4" height="6" fill="#f2f2f2" stroke="none"/>
  <rect x="764.8" y="60" width="6.4" height="6" rx="0.6" fill="#4f7fe0" stroke="none"/>
  <path d="M775,63l1.8,1.8l1.8,-1.8"/>
 </g>
 <!-- row 3 icons -->
 <g stroke-width="0.9">
  <rect x="652" y="76" width="7.6" height="7.6" rx="1.6"/><circle cx="659.4" cy="83.4" r="1.9" fill="#404040"/>
  <rect x="668.4" y="76" width="7.6" height="7.6" rx="1.6"/><circle cx="672.2" cy="79.6" r="1.7"/><path d="M669.8,82.6h4.8" stroke-width="0.7"/><circle cx="675.8" cy="83.4" r="1.9" fill="#404040"/>
  <path d="M685,77.4h2.8l1,1.2h4v5.2h-7.8z" fill="#dcdcdc" stroke="none"/><circle cx="692.6" cy="83.6" r="1.9" fill="#404040"/>
  <g stroke="#666"><rect x="702.4" y="78.8" width="5" height="5" rx="1"/><rect x="705.4" y="76" width="4.4" height="4.4" rx="1"/></g>
  <g stroke="#666"><rect x="719.4" y="78.8" width="5" height="5" rx="1"/><rect x="722.4" y="76" width="4.4" height="4.4" rx="1"/></g>
  <rect x="736.2" y="76.2" width="7.6" height="7.6" rx="1.6" fill="#8c8c8c" stroke="none"/><rect x="738" y="78" width="4" height="4" rx="1.2" fill="#4a4a4a" stroke="none"/>
  <g stroke="#666"><rect x="752.4" y="78" width="8.6" height="5.4" rx="1"/><rect x="753.8" y="76.6" width="3" height="1.4"/><rect x="757.4" y="79.4" width="2.4" height="2.6"/></g>
  <path d="M770.6,77.6h5.2M772.2,77.4v-1h2v1M771,77.8l0.4,6h3.6l0.4,-6" />
 </g>
</svg>
<span class="t" style="left:669.4px;top:45.17px;font-size:7.4px;color:#f0f0f0;transform:scaleX(0.823);transform-origin:0 0;">Normal</span>
<span class="t" style="left:762.6px;top:43.97px;font-size:7px;color:#f0f0f0;transform:scaleX(0.907);transform-origin:0 0;">100</span>
<div class="a" id="layerlist"></div>
<div class="a" style="left:778px;top:88px;width:4px;height:377px;background:#39393b"></div><div class="a" style="left:778.400px;top:88px;width:3px;height:301px;background:#4b4b4d;border-radius:1.500px"></div>
<div class="a" style="left:634px;top:88px;width:14.4px;height:44px;background:#343436"></div>
<div class="a" style="left:649.2px;top:88px;width:13.4px;height:44px;background:#343436"></div>
<div class="a" style="left:663.4px;top:88px;width:114.6px;height:44px;background:#343436"></div>
<span class="t" style="left:716px;top:96.13px;font-size:7.9px;color:#f2f2f2;transform:scaleX(0.780);transform-origin:0 0;">100 % Normal</span>
<span class="t" style="left:700.6px;top:121.13px;font-size:7.9px;color:#f2f2f2;">3</span>
<div class="a" style="left:634px;top:133px;width:14.4px;height:19px;background:#ef6ea1"></div>
<div class="a" style="left:649.2px;top:133px;width:13.4px;height:19px;background:#ef6ea1"></div>
<div class="a" style="left:663.4px;top:133px;width:114.6px;height:19px;background:#343436"></div>
<span class="t" style="left:696px;top:134.53px;font-size:7.9px;color:#f2f2f2;transform:scaleX(0.780);transform-origin:0 0;">100 % Normal</span>
<span class="t" style="left:696px;top:142.73px;font-size:7.9px;color:#f2f2f2;transform:scaleX(0.758);transform-origin:0 0;">Cabello : 2</span>
<div class="a" style="left:634px;top:153px;width:14.4px;height:42px;background:#343436"></div>
<div class="a" style="left:649.2px;top:153px;width:13.4px;height:42px;background:#343436"></div>
<div class="a" style="left:663.4px;top:153px;width:114.6px;height:42px;background:#4d5368"></div>
<span class="t" style="left:710px;top:160.33px;font-size:7.9px;color:#f2f2f2;transform:scaleX(0.780);transform-origin:0 0;">100 % Normal</span>
<span class="t" style="left:710px;top:185.53px;font-size:7.9px;color:#f2f2f2;">2</span>
<div class="a" style="left:634px;top:196px;width:14.4px;height:42px;background:#343436"></div>
<div class="a" style="left:649.2px;top:196px;width:13.4px;height:42px;background:#343436"></div>
<div class="a" style="left:663.4px;top:196px;width:114.6px;height:42px;background:#343436"></div>
<span class="t" style="left:710px;top:203.33px;font-size:7.9px;color:#f2f2f2;transform:scaleX(0.780);transform-origin:0 0;">100 % Normal</span>
<span class="t" style="left:710px;top:228.53px;font-size:7.9px;color:#f2f2f2;">1</span>
<div class="a" style="left:634px;top:239px;width:14.4px;height:19px;background:#fdaea2"></div>
<div class="a" style="left:649.2px;top:239px;width:13.4px;height:19px;background:#fdaea2"></div>
<div class="a" style="left:663.4px;top:239px;width:114.6px;height:19px;background:#343436"></div>
<span class="t" style="left:696px;top:240.53px;font-size:7.9px;color:#f2f2f2;transform:scaleX(0.780);transform-origin:0 0;">100 % Normal</span>
<span class="t" style="left:696px;top:248.73px;font-size:7.9px;color:#f2f2f2;transform:scaleX(0.778);transform-origin:0 0;">Brazo I : 2</span>
<div class="a" style="left:634px;top:259px;width:14.4px;height:18.5px;background:#fdd0c4"></div>
<div class="a" style="left:649.2px;top:259px;width:13.4px;height:18.5px;background:#fdd0c4"></div>
<div class="a" style="left:663.4px;top:259px;width:114.6px;height:18.5px;background:#343436"></div>
<span class="t" style="left:696px;top:260.53px;font-size:7.9px;color:#f2f2f2;transform:scaleX(0.780);transform-origin:0 0;">100 % Normal</span>
<span class="t" style="left:696px;top:268.73px;font-size:7.9px;color:#f2f2f2;transform:scaleX(0.770);transform-origin:0 0;">Cuerpo : 2</span>
<div class="a" style="left:634px;top:278.5px;width:14.4px;height:42.5px;background:#343436"></div>
<div class="a" style="left:649.2px;top:278.5px;width:13.4px;height:42.5px;background:#343436"></div>
<div class="a" style="left:663.4px;top:278.5px;width:114.6px;height:42.5px;background:#59617f"></div>
<span class="t" style="left:710px;top:285.83px;font-size:7.9px;color:#f2f2f2;transform:scaleX(0.780);transform-origin:0 0;">100 % Normal</span>
<span class="t" style="left:710px;top:311.03px;font-size:7.9px;color:#f2f2f2;">2</span>
<div class="a" style="left:634px;top:322px;width:14.4px;height:42px;background:#343436"></div>
<div class="a" style="left:649.2px;top:322px;width:13.4px;height:42px;background:#343436"></div>
<div class="a" style="left:663.4px;top:322px;width:114.6px;height:42px;background:#343436"></div>
<span class="t" style="left:710px;top:329.33px;font-size:7.9px;color:#f2f2f2;transform:scaleX(0.780);transform-origin:0 0;">100 % Normal</span>
<span class="t" style="left:710px;top:354.53px;font-size:7.9px;color:#f2f2f2;">1</span>
<div class="a" style="left:634px;top:365px;width:14.4px;height:19px;background:#fdaea2"></div>
<div class="a" style="left:649.2px;top:365px;width:13.4px;height:19px;background:#fdaea2"></div>
<div class="a" style="left:663.4px;top:365px;width:114.6px;height:19px;background:#343436"></div>
<span class="t" style="left:696px;top:366.53px;font-size:7.9px;color:#f2f2f2;transform:scaleX(0.780);transform-origin:0 0;">100 % Normal</span>
<span class="t" style="left:696px;top:374.73px;font-size:7.9px;color:#f2f2f2;transform:scaleX(0.775);transform-origin:0 0;">Brazo D : 2</span>
<div class="a" style="left:634px;top:385px;width:14.4px;height:19px;background:#ef6ea1"></div>
<div class="a" style="left:649.2px;top:385px;width:13.4px;height:19px;background:#ef6ea1"></div>
<div class="a" style="left:663.4px;top:385px;width:114.6px;height:19px;background:#343436"></div>
<span class="t" style="left:696px;top:386.53px;font-size:7.9px;color:#f2f2f2;transform:scaleX(0.780);transform-origin:0 0;">100 % Normal</span>
<span class="t" style="left:696px;top:394.73px;font-size:7.9px;color:#f2f2f2;transform:scaleX(0.756);transform-origin:0 0;">Cabello T : 2</span>
<div class="a" style="left:634px;top:405px;width:14.4px;height:42px;background:#343436"></div>
<div class="a" style="left:649.2px;top:405px;width:13.4px;height:42px;background:#343436"></div>
<div class="a" style="left:663.4px;top:405px;width:114.6px;height:42px;background:#4d5368"></div>
<span class="t" style="left:710px;top:412.33px;font-size:7.9px;color:#f2f2f2;transform:scaleX(0.780);transform-origin:0 0;">100 % Normal</span>
<span class="t" style="left:710px;top:437.53px;font-size:7.9px;color:#f2f2f2;">2</span>
<div class="a" style="left:634px;top:448px;width:14.4px;height:42px;background:#343436"></div>
<div class="a" style="left:649.2px;top:448px;width:13.4px;height:42px;background:#343436"></div>
<div class="a" style="left:663.4px;top:448px;width:114.6px;height:42px;background:#343436"></div>
<span class="t" style="left:710px;top:455.33px;font-size:7.9px;color:#f2f2f2;transform:scaleX(0.780);transform-origin:0 0;">100 % Normal</span>
<span class="t" style="left:710px;top:480.53px;font-size:7.9px;color:#f2f2f2;">1</span>
<svg style="left:0;top:0" width="799" height="465" viewBox="0 0 799 465"><defs><pattern id="ckL" width="4" height="4" patternUnits="userSpaceOnUse"><rect width="4" height="4" fill="#ffffff"/><rect width="2" height="2" fill="#dcdcdc"/><rect x="2" y="2" width="2" height="2" fill="#dcdcdc"/></pattern></defs>
<rect x="667.6" y="91" width="27.5" height="38" fill="url(#ckL)" stroke="#1c1c1c" stroke-width="0.8"/>
<rect x="703.4" y="91" width="10.4" height="10.4" rx="1" fill="#ececec"/><rect x="705" y="92.6" width="7.2" height="7.2" rx="1" fill="none" stroke="#444" stroke-width="0.7"/><circle cx="708.6" cy="96.2" r="2.2" fill="none" stroke="#444" stroke-width="0.7"/>
<path d="M636,110.5c2.6,-4 7.4,-4 10,0c-2.6,4 -7.4,4 -10,0z" fill="none" stroke="#e8e8e8" stroke-width="0.9"/><circle cx="641" cy="110.3" r="1.9" fill="#e8e8e8"/>
<rect x="652.8" y="107.5" width="6" height="6" rx="0.8" fill="none" stroke="#1e1e1e" stroke-width="0.9"/>
<path d="M770.6,108.7h3M770.6,110.5h3M770.6,112.3h3" stroke="#19191b" stroke-width="0.9"/>
<path d="M636,142.5c2.6,-4 7.4,-4 10,0c-2.6,4 -7.4,4 -10,0z" fill="none" stroke="#2a1a20" stroke-width="0.9"/><circle cx="641" cy="142.3" r="1.9" fill="#2a1a20"/>
<rect x="652.8" y="139.5" width="6" height="6" rx="0.8" fill="none" stroke="#7a3a4a" stroke-width="0.8" stroke-dasharray="1.2 0.9"/>
<path d="M668,142.1l2.2,2.2l2.2,-2.2" fill="none" stroke="#dcdcdc" stroke-width="0.9"/>
<rect x="681.6" y="138.9" width="7.6" height="5.6" rx="0.8" fill="none" stroke="#bdbdbd" stroke-width="0.8"/><rect x="680" y="140.7" width="7.8" height="5.4" rx="0.8" fill="#dcdcdc"/>
<path d="M770.6,140.7h3M770.6,142.5h3M770.6,144.3h3" stroke="#19191b" stroke-width="0.9"/>
<rect x="677" y="155" width="27.5" height="38" fill="url(#ckL)" stroke="#1c1c1c" stroke-width="0.8"/>
<path d="M686.9,159.3 L689.0,161.7 Q690.8,161.1 692.5,161.7 L694.6,159.3 L694.8,164.1 Q694.4,169.7 696.0,172.7 Q693.5,170.5 693.1,164.5 Q690.8,163.3 688.4,164.5 Q688.0,170.5 685.5,172.7 Q687.1,169.7 686.8,164.1 Z" fill="#4a4550"/><circle cx="687.8" cy="161.2" r="0.80" fill="#e8507c"/><circle cx="693.7" cy="161.2" r="0.80" fill="#e8507c"/><path d="M689.5,163.1 Q690.8,162.5 692.0,163.1" stroke="#e8507c" stroke-width="0.72" fill="none"/>
<path d="M636,174.5c2.6,-4 7.4,-4 10,0c-2.6,4 -7.4,4 -10,0z" fill="none" stroke="#e8e8e8" stroke-width="0.9"/><circle cx="641" cy="174.3" r="1.9" fill="#e8e8e8"/>
<path d="M652.6,174.5l2,2l3.6,-4.2" fill="none" stroke="#e8e8e8" stroke-width="0.9"/>
<path d="M770.6,172.7h3M770.6,174.5h3M770.6,176.3h3" stroke="#1e1e22" stroke-width="0.9"/>
<rect x="677" y="198" width="27.5" height="38" fill="url(#ckL)" stroke="#1c1c1c" stroke-width="0.8"/>
<path d="M686.9,202.3 L689.0,204.7 Q690.8,204.1 692.5,204.7 L694.6,202.3 L694.8,207.1 Q694.4,212.7 696.0,215.7 Q693.5,213.5 693.1,207.5 Q690.8,206.3 688.4,207.5 Q688.0,213.5 685.5,215.7 Q687.1,212.7 686.8,207.1 Z" fill="#4a4550"/><circle cx="687.8" cy="204.2" r="0.80" fill="#e8507c"/><circle cx="693.7" cy="204.2" r="0.80" fill="#e8507c"/><path d="M689.5,206.1 Q690.8,205.5 692.0,206.1" stroke="#e8507c" stroke-width="0.72" fill="none"/>
<path d="M636,217.5c2.6,-4 7.4,-4 10,0c-2.6,4 -7.4,4 -10,0z" fill="none" stroke="#55555a" stroke-width="0.9"/><circle cx="641" cy="217.3" r="1.9" fill="#55555a"/>
<rect x="652.8" y="214.5" width="6" height="6" rx="0.8" fill="none" stroke="#1e1e1e" stroke-width="0.9"/>
<path d="M770.6,215.7h3M770.6,217.5h3M770.6,219.3h3" stroke="#19191b" stroke-width="0.9"/>
<path d="M636,248.5c2.6,-4 7.4,-4 10,0c-2.6,4 -7.4,4 -10,0z" fill="none" stroke="#2a1a20" stroke-width="0.9"/><circle cx="641" cy="248.3" r="1.9" fill="#2a1a20"/>
<rect x="652.8" y="245.5" width="6" height="6" rx="0.8" fill="none" stroke="#7a3a4a" stroke-width="0.8" />
<path d="M669.4,246.1l2.2,2.2l-2.2,2.2" fill="none" stroke="#dcdcdc" stroke-width="0.9"/>
<rect x="681.6" y="244.9" width="7.6" height="5.6" rx="0.8" fill="none" stroke="#bdbdbd" stroke-width="0.8"/><rect x="680" y="246.7" width="7.8" height="5.4" rx="0.8" fill="#dcdcdc"/>
<path d="M770.6,246.7h3M770.6,248.5h3M770.6,250.3h3" stroke="#19191b" stroke-width="0.9"/>
<path d="M636,268.25c2.6,-4 7.4,-4 10,0c-2.6,4 -7.4,4 -10,0z" fill="none" stroke="#2a1a20" stroke-width="0.9"/><circle cx="641" cy="268.05" r="1.9" fill="#2a1a20"/>
<rect x="652.8" y="265.25" width="6" height="6" rx="0.8" fill="none" stroke="#7a3a4a" stroke-width="0.8" />
<path d="M668,267.85l2.2,2.2l2.2,-2.2" fill="none" stroke="#dcdcdc" stroke-width="0.9"/>
<rect x="681.6" y="264.65" width="7.6" height="5.6" rx="0.8" fill="none" stroke="#bdbdbd" stroke-width="0.8"/><rect x="680" y="266.45" width="7.8" height="5.4" rx="0.8" fill="#dcdcdc"/>
<path d="M770.6,266.45h3M770.6,268.25h3M770.6,270.05h3" stroke="#19191b" stroke-width="0.9"/>
<rect x="677" y="280.5" width="27.5" height="38" fill="url(#ckL)" stroke="#e8e8f0" stroke-width="0.8"/>
<path d="M689.3,299.8V311.5M692.2,299.8V311.5" stroke="#f6c4b6" stroke-width="1.14"/><path d="M689.6,292.5H691.9L694.9,299.5Q690.8,301.6 686.6,299.5Z" fill="#fff" stroke="#8a8a90" stroke-width="0.38"/><ellipse cx="690.8" cy="289.1" rx="2.43" ry="2.74" fill="#fbd9ce" stroke="#d8a8a0" stroke-width="0.300"/><path d="M689.3,289.4h0.91M691.3,289.4h0.91" stroke="#3a6ac0" stroke-width="0.84"/><circle cx="690.8" cy="295.2" r="0.68" fill="#222"/><path d="M688.3,312.1h1.82M691.4,312.1h1.82" stroke="#222" stroke-width="1.14"/>
<path d="M636,300.2c2.6,-4 7.4,-4 10,0c-2.6,4 -7.4,4 -10,0z" fill="none" stroke="#e8e8e8" stroke-width="0.9"/><circle cx="641" cy="300.0" r="1.9" fill="#e8e8e8"/>
<path d="M652.4,303.59999999999997h7M653.2,302.4l5,-5.6" fill="none" stroke="#e8e8e8" stroke-width="0.9"/>
<path d="M770.6,298.4h3M770.6,300.2h3M770.6,302.0h3" stroke="#1e1e22" stroke-width="0.9"/>
<rect x="677" y="324" width="27.5" height="38" fill="url(#ckL)" stroke="#1c1c1c" stroke-width="0.8"/>
<path d="M689.3,343.3V355.0M692.2,343.3V355.0" stroke="#f6c4b6" stroke-width="1.14"/><path d="M689.6,336.0H691.9L694.9,343.0Q690.8,345.1 686.6,343.0Z" fill="#fff" stroke="#8a8a90" stroke-width="0.38"/><ellipse cx="690.8" cy="332.6" rx="2.43" ry="2.74" fill="#fbd9ce" stroke="#d8a8a0" stroke-width="0.300"/><path d="M689.3,332.9h0.91M691.3,332.9h0.91" stroke="#3a6ac0" stroke-width="0.84"/><circle cx="690.8" cy="338.7" r="0.68" fill="#222"/><path d="M688.3,355.6h1.82M691.4,355.6h1.82" stroke="#222" stroke-width="1.14"/>
<path d="M636,343.5c2.6,-4 7.4,-4 10,0c-2.6,4 -7.4,4 -10,0z" fill="none" stroke="#55555a" stroke-width="0.9"/><circle cx="641" cy="343.3" r="1.9" fill="#55555a"/>
<rect x="652.8" y="340.5" width="6" height="6" rx="0.8" fill="none" stroke="#1e1e1e" stroke-width="0.9"/>
<path d="M770.6,341.7h3M770.6,343.5h3M770.6,345.3h3" stroke="#19191b" stroke-width="0.9"/>
<path d="M636,374.5c2.6,-4 7.4,-4 10,0c-2.6,4 -7.4,4 -10,0z" fill="none" stroke="#2a1a20" stroke-width="0.9"/><circle cx="641" cy="374.3" r="1.9" fill="#2a1a20"/>
<rect x="652.8" y="371.5" width="6" height="6" rx="0.8" fill="none" stroke="#7a3a4a" stroke-width="0.8" />
<path d="M669.4,372.1l2.2,2.2l-2.2,2.2" fill="none" stroke="#dcdcdc" stroke-width="0.9"/>
<rect x="681.6" y="370.9" width="7.6" height="5.6" rx="0.8" fill="none" stroke="#bdbdbd" stroke-width="0.8"/><rect x="680" y="372.7" width="7.8" height="5.4" rx="0.8" fill="#dcdcdc"/>
<path d="M770.6,372.7h3M770.6,374.5h3M770.6,376.3h3" stroke="#19191b" stroke-width="0.9"/>
<path d="M636,394.5c2.6,-4 7.4,-4 10,0c-2.6,4 -7.4,4 -10,0z" fill="none" stroke="#2a1a20" stroke-width="0.9"/><circle cx="641" cy="394.3" r="1.9" fill="#2a1a20"/>
<rect x="652.8" y="391.5" width="6" height="6" rx="0.8" fill="none" stroke="#7a3a4a" stroke-width="0.8" stroke-dasharray="1.2 0.9"/>
<path d="M668,394.1l2.2,2.2l2.2,-2.2" fill="none" stroke="#dcdcdc" stroke-width="0.9"/>
<rect x="681.6" y="390.9" width="7.6" height="5.6" rx="0.8" fill="none" stroke="#bdbdbd" stroke-width="0.8"/><rect x="680" y="392.7" width="7.8" height="5.4" rx="0.8" fill="#dcdcdc"/>
<path d="M770.6,392.7h3M770.6,394.5h3M770.6,396.3h3" stroke="#19191b" stroke-width="0.9"/>
<rect x="677" y="407" width="27.5" height="38" fill="url(#ckL)" stroke="#1c1c1c" stroke-width="0.8"/>
<path d="M687.35,431c-1.6,0.4 -2.6,0 -3.6,-1c1.8,-1.4 2.6,-4 2.8,-8c0.2,-5 1.6,-8.6 4.2,-8.6c2.6,0 4,3.6 4.2,8.6c0.2,4 1,6.600 2.800,8c-1,1 -2,1.400 -3.600,1z" fill="#ef6ea1"/>
<path d="M636,426.5c2.6,-4 7.4,-4 10,0c-2.6,4 -7.4,4 -10,0z" fill="none" stroke="#e8e8e8" stroke-width="0.9"/><circle cx="641" cy="426.3" r="1.9" fill="#e8e8e8"/>
<path d="M652.6,426.5l2,2l3.6,-4.2" fill="none" stroke="#e8e8e8" stroke-width="0.9"/>
<path d="M770.6,424.7h3M770.6,426.5h3M770.6,428.3h3" stroke="#1e1e22" stroke-width="0.9"/>
<rect x="677" y="450" width="27.5" height="38" fill="url(#ckL)" stroke="#1c1c1c" stroke-width="0.8"/>
<path d="M687.35,474c-1.6,0.4 -2.6,0 -3.6,-1c1.8,-1.4 2.6,-4 2.8,-8c0.2,-5 1.6,-8.6 4.2,-8.6c2.6,0 4,3.6 4.2,8.6c0.2,4 1,6.600 2.800,8c-1,1 -2,1.400 -3.600,1z" fill="#ef6ea1"/>
<path d="M770.6,467.7h3M770.6,469.5h3M770.6,471.3h3" stroke="#19191b" stroke-width="0.9"/>
</svg>
<div class="a" style="left:782px;top:30px;width:17px;height:435px;background:#2b2b2b"></div>
<div class="a" style="left:795px;top:99px;width:8px;height:50px;background:#5a5a5a;border-radius:3px"></div>
<div class="a" style="left:783.800px;top:332.600px;width:31.400px;height:31.400px;border-radius:16px;border:2px solid #ececec;background:#404042"></div>
<svg style="left:783px;top:332px" width="16" height="32" viewBox="783 332 16 32" fill="none" stroke="#ececec" stroke-width="1.200" stroke-linecap="round" stroke-linejoin="round"><path d="M793.400,345l-3.200,3.200l3.200,3.200"/><rect x="796.800" y="341.600" width="8" height="13.200" rx="1" fill="#6a6a6c"/></svg>
</body>
</html>
